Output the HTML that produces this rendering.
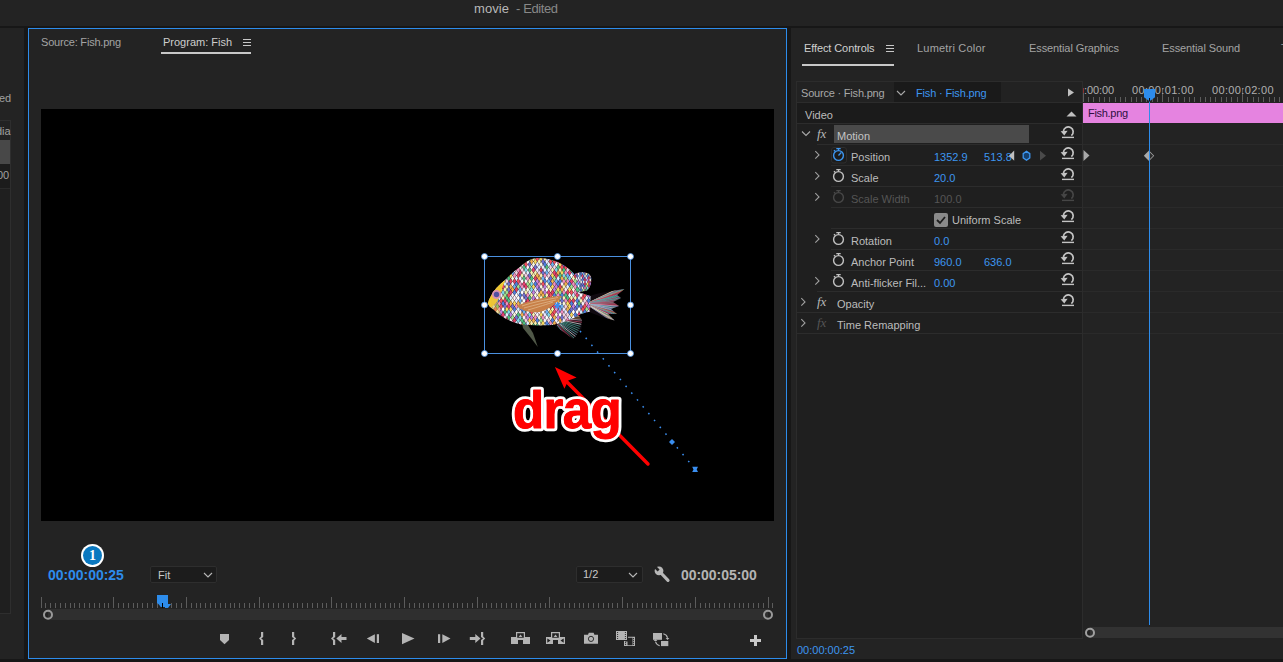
<!DOCTYPE html>
<html><head><meta charset="utf-8">
<style>
*{margin:0;padding:0;box-sizing:border-box}
html,body{width:1283px;height:662px;overflow:hidden;background:#171717;font-family:"Liberation Sans",sans-serif;position:relative}
.a{position:absolute}
.t{position:absolute;white-space:pre;line-height:1;font-size:11px;color:#b4b4b4}
</style></head><body>
<div class="a" style="left:0;top:0;width:1283px;height:26px;background:#232323"></div>
<div class="t" style="left:474px;top:2px;font-size:13px;color:#b8b8b8;letter-spacing:0.1px">movie</div>
<div class="t" style="left:516px;top:2px;font-size:13px;color:#888888;letter-spacing:-0.4px">- Edited</div>
<div class="a" style="left:0;top:28px;width:24px;height:631px;background:#232323"></div>
<div class="t" style="left:-1px;top:93px;color:#a0a0a0">ed</div>
<div class="a" style="left:0;top:120px;width:11px;height:494px;background:#1f1f1f;border-right:1px solid #2e2e2e;border-top:1px solid #2e2e2e;border-bottom:1px solid #2e2e2e"></div>
<div class="a" style="left:0;top:121px;width:10px;height:19px;background:#222"></div>
<div class="a" style="left:0;top:140px;width:10px;height:24px;background:#484848"></div>
<div class="a" style="left:0;top:164px;width:10px;height:24px;background:#1c1c1c"></div>
<div class="a" style="left:0;top:188px;width:10px;height:1px;background:#2a2a2a"></div>
<div class="t" style="left:-4px;top:126px;color:#a0a0a0">dia</div>
<div class="t" style="left:-3px;top:170px;color:#a0a0a0">00</div>
<div class="a" style="left:28px;top:28px;width:759px;height:631px;background:#232323;border:1px solid #2d8ceb"></div>
<div class="a" style="left:791px;top:28px;width:492px;height:631px;background:#232323"></div>
<div class="t" style="left:41px;top:37px;color:#a4a4a4;letter-spacing:-0.2px">Source: Fish.png</div>
<div class="t" style="left:163px;top:37px;color:#cdcdcd;letter-spacing:0px">Program: Fish</div>
<svg class="a" style="left:242px;top:38px" width="10" height="9"><path d="M1 1.5h8M1 4.5h8M1 7.5h8" stroke="#c8c8c8" stroke-width="1.2"/></svg>
<div class="a" style="left:161px;top:52px;width:90px;height:2px;background:#c8c8c8"></div>
<div class="a" style="left:41px;top:109px;width:733px;height:412px;background:#000"></div>
<svg class="a" style="left:41px;top:109px" width="733" height="412" viewBox="41 109 733 412">
<defs><clipPath id="cb"><path d="M488 303 C490 295 497 286 505 280 C510 275 515 270 520 267 C525 262 531 258 538 258 C548 258 558 261 565 266 C571 270 575 274 578 280 L578 292 L590.5 296 L590 311.5 L581 314 C575 318 565 322 555 324.6 C545 326 530 325.5 521 324.6 C510 322 500 316 494 310 C490 307 488 305 488 303 Z"/></clipPath><clipPath id="ct"><path d="M589 296 L600 293 L612 291 L624.5 289 L617 295 L621 298 L613 302 L619 306 L611 309 L617 314 L608 314 L614.6 320.6 L602 317 L589 312 Z"/></clipPath><clipPath id="cd"><path d="M574.6 274 C578 272 584 272 587 273 C590 274 592 277 591.3 281 C591 286 589 289 586.7 290.7 L577.7 292.3 Z"/></clipPath><clipPath id="ca"><path d="M555 325.8 L578 314.3 L582 320 L581.4 328.6 L576 336 L573.3 339 L566 334 Z"/></clipPath></defs>
<g clip-path="url(#ct)"><rect x="585" y="285" width="42" height="40" fill="#100a10"/><path d="M586 304L627.0 284.0" stroke="#e0b070" stroke-width="0.7"/>
<path d="M586 304L626.8 284.9" stroke="#f0d0e0" stroke-width="0.7"/>
<path d="M586 304L626.5 285.8" stroke="#50b0a0" stroke-width="0.7"/>
<path d="M586 304L626.3 286.7" stroke="#d05070" stroke-width="0.7"/>
<path d="M586 304L626.0 287.6" stroke="#70b0c0" stroke-width="0.7"/>
<path d="M586 304L625.8 288.4" stroke="#70b0c0" stroke-width="0.7"/>
<path d="M586 304L625.5 289.3" stroke="#e0b070" stroke-width="0.7"/>
<path d="M586 304L625.3 290.2" stroke="#d05070" stroke-width="0.7"/>
<path d="M586 304L625.0 291.1" stroke="#c04060" stroke-width="0.7"/>
<path d="M586 304L624.8 292.0" stroke="#d05070" stroke-width="0.7"/>
<path d="M586 304L624.6 292.9" stroke="#70b0c0" stroke-width="0.7"/>
<path d="M586 304L624.3 293.8" stroke="#50b0a0" stroke-width="0.7"/>
<path d="M586 304L624.1 294.7" stroke="#50b0a0" stroke-width="0.7"/>
<path d="M586 304L623.8 295.6" stroke="#70b0c0" stroke-width="0.7"/>
<path d="M586 304L623.6 296.4" stroke="#c04060" stroke-width="0.7"/>
<path d="M586 304L623.3 297.3" stroke="#70b0c0" stroke-width="0.7"/>
<path d="M586 304L623.1 298.2" stroke="#50b0a0" stroke-width="0.7"/>
<path d="M586 304L622.8 299.1" stroke="#d05070" stroke-width="0.7"/>
<path d="M586 304L622.6 300.0" stroke="#70b0c0" stroke-width="0.7"/>
<path d="M586 304L622.4 300.9" stroke="#c04060" stroke-width="0.7"/>
<path d="M586 304L622.1 301.8" stroke="#d05070" stroke-width="0.7"/>
<path d="M586 304L621.9 302.7" stroke="#50b0a0" stroke-width="0.7"/>
<path d="M586 304L621.6 303.6" stroke="#d05070" stroke-width="0.7"/>
<path d="M586 304L621.4 304.4" stroke="#c04060" stroke-width="0.7"/>
<path d="M586 304L621.1 305.3" stroke="#d05070" stroke-width="0.7"/>
<path d="M586 304L620.9 306.2" stroke="#f0d0e0" stroke-width="0.7"/>
<path d="M586 304L620.6 307.1" stroke="#8090d0" stroke-width="0.7"/>
<path d="M586 304L620.4 308.0" stroke="#50b0a0" stroke-width="0.7"/>
<path d="M586 304L620.2 308.9" stroke="#f0d0e0" stroke-width="0.7"/>
<path d="M586 304L619.9 309.8" stroke="#70b0c0" stroke-width="0.7"/>
<path d="M586 304L619.7 310.7" stroke="#8090d0" stroke-width="0.7"/>
<path d="M586 304L619.4 311.6" stroke="#f0d0e0" stroke-width="0.7"/>
<path d="M586 304L619.2 312.4" stroke="#70b0c0" stroke-width="0.7"/>
<path d="M586 304L618.9 313.3" stroke="#c04060" stroke-width="0.7"/>
<path d="M586 304L618.7 314.2" stroke="#e0b070" stroke-width="0.7"/>
<path d="M586 304L618.4 315.1" stroke="#70b0c0" stroke-width="0.7"/>
<path d="M586 304L618.2 316.0" stroke="#70b0c0" stroke-width="0.7"/>
<path d="M586 304L618.0 316.9" stroke="#d05070" stroke-width="0.7"/>
<path d="M586 304L617.7 317.8" stroke="#c04060" stroke-width="0.7"/>
<path d="M586 304L617.5 318.7" stroke="#f0f0f0" stroke-width="0.7"/>
<path d="M586 304L617.2 319.6" stroke="#50b0a0" stroke-width="0.7"/>
<path d="M586 304L617.0 320.4" stroke="#e0b070" stroke-width="0.7"/>
<path d="M586 304L616.7 321.3" stroke="#f0f0f0" stroke-width="0.7"/>
<path d="M586 304L616.5 322.2" stroke="#f0f0f0" stroke-width="0.7"/>
<path d="M586 304L616.2 323.1" stroke="#e0b070" stroke-width="0.7"/>
<path d="M586 304L616.0 324.0" stroke="#8090d0" stroke-width="0.7"/></g>
<g clip-path="url(#cd)"><rect x="570" y="270" width="25" height="25" fill="#2a1a28"/><path d="M572.0 270.0l1.0 2.0-1.0 2.0-1.0-2.0z" fill="#f0b050"/>
<path d="M574.6 270.0l1.0 2.0-1.0 2.0-1.0-2.0z" fill="#a0e090"/>
<path d="M577.2 270.0l1.0 2.0-1.0 2.0-1.0-2.0z" fill="#f0b050"/>
<path d="M579.8 270.0l1.0 2.0-1.0 2.0-1.0-2.0z" fill="#5080e0"/>
<path d="M582.4 270.0l1.0 2.0-1.0 2.0-1.0-2.0z" fill="#d0e8f8"/>
<path d="M585.0 270.0l1.0 2.0-1.0 2.0-1.0-2.0z" fill="#c080e0"/>
<path d="M587.6 270.0l1.0 2.0-1.0 2.0-1.0-2.0z" fill="#f8f0b0"/>
<path d="M590.2 270.0l1.0 2.0-1.0 2.0-1.0-2.0z" fill="#7070d0"/>
<path d="M592.8 270.0l1.0 2.0-1.0 2.0-1.0-2.0z" fill="#f8f0f8"/>
<path d="M573.3 272.0l1.0 2.0-1.0 2.0-1.0-2.0z" fill="#e04060"/>
<path d="M575.9 272.0l1.0 2.0-1.0 2.0-1.0-2.0z" fill="#c080e0"/>
<path d="M578.5 272.0l1.0 2.0-1.0 2.0-1.0-2.0z" fill="#fff0f8"/>
<path d="M581.1 272.0l1.0 2.0-1.0 2.0-1.0-2.0z" fill="#5080e0"/>
<path d="M583.7 272.0l1.0 2.0-1.0 2.0-1.0-2.0z" fill="#70b0f0"/>
<path d="M586.3 272.0l1.0 2.0-1.0 2.0-1.0-2.0z" fill="#f8f0b0"/>
<path d="M588.9 272.0l1.0 2.0-1.0 2.0-1.0-2.0z" fill="#80d8e8"/>
<path d="M591.5 272.0l1.0 2.0-1.0 2.0-1.0-2.0z" fill="#a0e090"/>
<path d="M572.0 274.0l1.0 2.0-1.0 2.0-1.0-2.0z" fill="#f8f0f8"/>
<path d="M574.6 274.0l1.0 2.0-1.0 2.0-1.0-2.0z" fill="#50c080"/>
<path d="M577.2 274.0l1.0 2.0-1.0 2.0-1.0-2.0z" fill="#7070d0"/>
<path d="M579.8 274.0l1.0 2.0-1.0 2.0-1.0-2.0z" fill="#80d8e8"/>
<path d="M582.4 274.0l1.0 2.0-1.0 2.0-1.0-2.0z" fill="#e84070"/>
<path d="M585.0 274.0l1.0 2.0-1.0 2.0-1.0-2.0z" fill="#e0f0ff"/>
<path d="M587.6 274.0l1.0 2.0-1.0 2.0-1.0-2.0z" fill="#5080e0"/>
<path d="M590.2 274.0l1.0 2.0-1.0 2.0-1.0-2.0z" fill="#f0d0e0"/>
<path d="M592.8 274.0l1.0 2.0-1.0 2.0-1.0-2.0z" fill="#d0e8f8"/>
<path d="M573.3 276.0l1.0 2.0-1.0 2.0-1.0-2.0z" fill="#f8f0f8"/>
<path d="M575.9 276.0l1.0 2.0-1.0 2.0-1.0-2.0z" fill="#f8f0f8"/>
<path d="M578.5 276.0l1.0 2.0-1.0 2.0-1.0-2.0z" fill="#e8e8ff"/>
<path d="M581.1 276.0l1.0 2.0-1.0 2.0-1.0-2.0z" fill="#fff0f8"/>
<path d="M583.7 276.0l1.0 2.0-1.0 2.0-1.0-2.0z" fill="#7070d0"/>
<path d="M586.3 276.0l1.0 2.0-1.0 2.0-1.0-2.0z" fill="#d0e8f8"/>
<path d="M588.9 276.0l1.0 2.0-1.0 2.0-1.0-2.0z" fill="#e04060"/>
<path d="M591.5 276.0l1.0 2.0-1.0 2.0-1.0-2.0z" fill="#5080e0"/>
<path d="M572.0 278.0l1.0 2.0-1.0 2.0-1.0-2.0z" fill="#5080e0"/>
<path d="M574.6 278.0l1.0 2.0-1.0 2.0-1.0-2.0z" fill="#f090c0"/>
<path d="M577.2 278.0l1.0 2.0-1.0 2.0-1.0-2.0z" fill="#7070d0"/>
<path d="M579.8 278.0l1.0 2.0-1.0 2.0-1.0-2.0z" fill="#e0f0ff"/>
<path d="M582.4 278.0l1.0 2.0-1.0 2.0-1.0-2.0z" fill="#5080e0"/>
<path d="M585.0 278.0l1.0 2.0-1.0 2.0-1.0-2.0z" fill="#e84070"/>
<path d="M587.6 278.0l1.0 2.0-1.0 2.0-1.0-2.0z" fill="#c080e0"/>
<path d="M590.2 278.0l1.0 2.0-1.0 2.0-1.0-2.0z" fill="#f8f8e0"/>
<path d="M592.8 278.0l1.0 2.0-1.0 2.0-1.0-2.0z" fill="#d0e8f8"/>
<path d="M573.3 280.0l1.0 2.0-1.0 2.0-1.0-2.0z" fill="#e0f0ff"/>
<path d="M575.9 280.0l1.0 2.0-1.0 2.0-1.0-2.0z" fill="#e04060"/>
<path d="M578.5 280.0l1.0 2.0-1.0 2.0-1.0-2.0z" fill="#c080e0"/>
<path d="M581.1 280.0l1.0 2.0-1.0 2.0-1.0-2.0z" fill="#ffffff"/>
<path d="M583.7 280.0l1.0 2.0-1.0 2.0-1.0-2.0z" fill="#e0f0ff"/>
<path d="M586.3 280.0l1.0 2.0-1.0 2.0-1.0-2.0z" fill="#e8e8ff"/>
<path d="M588.9 280.0l1.0 2.0-1.0 2.0-1.0-2.0z" fill="#f05060"/>
<path d="M591.5 280.0l1.0 2.0-1.0 2.0-1.0-2.0z" fill="#e04060"/>
<path d="M572.0 282.0l1.0 2.0-1.0 2.0-1.0-2.0z" fill="#e8e8ff"/>
<path d="M574.6 282.0l1.0 2.0-1.0 2.0-1.0-2.0z" fill="#a0e090"/>
<path d="M577.2 282.0l1.0 2.0-1.0 2.0-1.0-2.0z" fill="#fff0f8"/>
<path d="M579.8 282.0l1.0 2.0-1.0 2.0-1.0-2.0z" fill="#70b0f0"/>
<path d="M582.4 282.0l1.0 2.0-1.0 2.0-1.0-2.0z" fill="#7070d0"/>
<path d="M585.0 282.0l1.0 2.0-1.0 2.0-1.0-2.0z" fill="#e84070"/>
<path d="M587.6 282.0l1.0 2.0-1.0 2.0-1.0-2.0z" fill="#f8d860"/>
<path d="M590.2 282.0l1.0 2.0-1.0 2.0-1.0-2.0z" fill="#c080e0"/>
<path d="M592.8 282.0l1.0 2.0-1.0 2.0-1.0-2.0z" fill="#50c080"/>
<path d="M573.3 284.0l1.0 2.0-1.0 2.0-1.0-2.0z" fill="#f0b050"/>
<path d="M575.9 284.0l1.0 2.0-1.0 2.0-1.0-2.0z" fill="#ffffff"/>
<path d="M578.5 284.0l1.0 2.0-1.0 2.0-1.0-2.0z" fill="#ffffff"/>
<path d="M581.1 284.0l1.0 2.0-1.0 2.0-1.0-2.0z" fill="#7070d0"/>
<path d="M583.7 284.0l1.0 2.0-1.0 2.0-1.0-2.0z" fill="#5080e0"/>
<path d="M586.3 284.0l1.0 2.0-1.0 2.0-1.0-2.0z" fill="#a0e090"/>
<path d="M588.9 284.0l1.0 2.0-1.0 2.0-1.0-2.0z" fill="#e04060"/>
<path d="M591.5 284.0l1.0 2.0-1.0 2.0-1.0-2.0z" fill="#ffffff"/>
<path d="M572.0 286.0l1.0 2.0-1.0 2.0-1.0-2.0z" fill="#f0d0e0"/>
<path d="M574.6 286.0l1.0 2.0-1.0 2.0-1.0-2.0z" fill="#f090c0"/>
<path d="M577.2 286.0l1.0 2.0-1.0 2.0-1.0-2.0z" fill="#50c080"/>
<path d="M579.8 286.0l1.0 2.0-1.0 2.0-1.0-2.0z" fill="#80d8e8"/>
<path d="M582.4 286.0l1.0 2.0-1.0 2.0-1.0-2.0z" fill="#f0d0e0"/>
<path d="M585.0 286.0l1.0 2.0-1.0 2.0-1.0-2.0z" fill="#f090c0"/>
<path d="M587.6 286.0l1.0 2.0-1.0 2.0-1.0-2.0z" fill="#80d8e8"/>
<path d="M590.2 286.0l1.0 2.0-1.0 2.0-1.0-2.0z" fill="#e8e8ff"/>
<path d="M592.8 286.0l1.0 2.0-1.0 2.0-1.0-2.0z" fill="#e0f0ff"/>
<path d="M573.3 288.0l1.0 2.0-1.0 2.0-1.0-2.0z" fill="#ffffff"/>
<path d="M575.9 288.0l1.0 2.0-1.0 2.0-1.0-2.0z" fill="#f0b050"/>
<path d="M578.5 288.0l1.0 2.0-1.0 2.0-1.0-2.0z" fill="#50c080"/>
<path d="M581.1 288.0l1.0 2.0-1.0 2.0-1.0-2.0z" fill="#5080e0"/>
<path d="M583.7 288.0l1.0 2.0-1.0 2.0-1.0-2.0z" fill="#a0e090"/>
<path d="M586.3 288.0l1.0 2.0-1.0 2.0-1.0-2.0z" fill="#50c080"/>
<path d="M588.9 288.0l1.0 2.0-1.0 2.0-1.0-2.0z" fill="#f0b050"/>
<path d="M591.5 288.0l1.0 2.0-1.0 2.0-1.0-2.0z" fill="#e0f0ff"/>
<path d="M572.0 290.0l1.0 2.0-1.0 2.0-1.0-2.0z" fill="#f0b050"/>
<path d="M574.6 290.0l1.0 2.0-1.0 2.0-1.0-2.0z" fill="#f05060"/>
<path d="M577.2 290.0l1.0 2.0-1.0 2.0-1.0-2.0z" fill="#7070d0"/>
<path d="M579.8 290.0l1.0 2.0-1.0 2.0-1.0-2.0z" fill="#d0e8f8"/>
<path d="M582.4 290.0l1.0 2.0-1.0 2.0-1.0-2.0z" fill="#a0e090"/>
<path d="M585.0 290.0l1.0 2.0-1.0 2.0-1.0-2.0z" fill="#f090c0"/>
<path d="M587.6 290.0l1.0 2.0-1.0 2.0-1.0-2.0z" fill="#c080e0"/>
<path d="M590.2 290.0l1.0 2.0-1.0 2.0-1.0-2.0z" fill="#f05060"/>
<path d="M592.8 290.0l1.0 2.0-1.0 2.0-1.0-2.0z" fill="#50c080"/></g>
<g clip-path="url(#ca)"><rect x="552" y="312" width="32" height="30" fill="#100a10"/><path d="M552 318L586.0 314.0" stroke="#50b0a0" stroke-width="0.7"/>
<path d="M552 318L585.1 316.1" stroke="#e0b070" stroke-width="0.7"/>
<path d="M552 318L584.1 318.1" stroke="#e0b070" stroke-width="0.7"/>
<path d="M552 318L583.2 320.2" stroke="#f0d0e0" stroke-width="0.7"/>
<path d="M552 318L582.3 322.3" stroke="#d05070" stroke-width="0.7"/>
<path d="M552 318L581.3 324.3" stroke="#f0f0f0" stroke-width="0.7"/>
<path d="M552 318L580.4 326.4" stroke="#50b0a0" stroke-width="0.7"/>
<path d="M552 318L579.5 328.5" stroke="#50b0a0" stroke-width="0.7"/>
<path d="M552 318L578.5 330.5" stroke="#50b0a0" stroke-width="0.7"/>
<path d="M552 318L577.6 332.6" stroke="#50b0a0" stroke-width="0.7"/>
<path d="M552 318L576.7 334.7" stroke="#70b0c0" stroke-width="0.7"/>
<path d="M552 318L575.7 336.7" stroke="#f0f0f0" stroke-width="0.7"/>
<path d="M552 318L574.8 338.8" stroke="#50b0a0" stroke-width="0.7"/>
<path d="M552 318L573.9 340.9" stroke="#d05070" stroke-width="0.7"/>
<path d="M552 318L572.9 342.9" stroke="#c04060" stroke-width="0.7"/>
<path d="M552 318L572.0 345.0" stroke="#70b0c0" stroke-width="0.7"/></g>
<path d="M522 323 L528 325 L533 333 L537.8 347 L531 338 L523 328 Z" fill="#505848"/>
<g clip-path="url(#cb)"><rect x="486" y="256" width="108" height="72" fill="#201018"/><path d="M486.0 253.2l1.6 2.8-1.6 2.8-1.6-2.8z" fill="#f8d860"/>
<path d="M489.8 253.2l1.6 2.8-1.6 2.8-1.6-2.8z" fill="#e04060"/>
<path d="M493.6 253.2l1.6 2.8-1.6 2.8-1.6-2.8z" fill="#a0e090"/>
<path d="M497.4 253.2l1.6 2.8-1.6 2.8-1.6-2.8z" fill="#70b0f0"/>
<path d="M501.2 253.2l1.6 2.8-1.6 2.8-1.6-2.8z" fill="#f8f0f8"/>
<path d="M505.0 253.2l1.6 2.8-1.6 2.8-1.6-2.8z" fill="#fff0f8"/>
<path d="M508.8 253.2l1.6 2.8-1.6 2.8-1.6-2.8z" fill="#e84070"/>
<path d="M512.6 253.2l1.6 2.8-1.6 2.8-1.6-2.8z" fill="#70b0f0"/>
<path d="M516.4 253.2l1.6 2.8-1.6 2.8-1.6-2.8z" fill="#f05060"/>
<path d="M520.2 253.2l1.6 2.8-1.6 2.8-1.6-2.8z" fill="#d0e8f8"/>
<path d="M524.0 253.2l1.6 2.8-1.6 2.8-1.6-2.8z" fill="#50c080"/>
<path d="M527.8 253.2l1.6 2.8-1.6 2.8-1.6-2.8z" fill="#f0d0e0"/>
<path d="M531.6 253.2l1.6 2.8-1.6 2.8-1.6-2.8z" fill="#70b0f0"/>
<path d="M535.4 253.2l1.6 2.8-1.6 2.8-1.6-2.8z" fill="#e8e8ff"/>
<path d="M539.2 253.2l1.6 2.8-1.6 2.8-1.6-2.8z" fill="#fff0f8"/>
<path d="M543.0 253.2l1.6 2.8-1.6 2.8-1.6-2.8z" fill="#f05060"/>
<path d="M546.8 253.2l1.6 2.8-1.6 2.8-1.6-2.8z" fill="#5080e0"/>
<path d="M550.6 253.2l1.6 2.8-1.6 2.8-1.6-2.8z" fill="#f8d860"/>
<path d="M554.4 253.2l1.6 2.8-1.6 2.8-1.6-2.8z" fill="#fff0f8"/>
<path d="M558.2 253.2l1.6 2.8-1.6 2.8-1.6-2.8z" fill="#ffffff"/>
<path d="M562.0 253.2l1.6 2.8-1.6 2.8-1.6-2.8z" fill="#50c080"/>
<path d="M565.8 253.2l1.6 2.8-1.6 2.8-1.6-2.8z" fill="#f8f8e0"/>
<path d="M569.6 253.2l1.6 2.8-1.6 2.8-1.6-2.8z" fill="#f090c0"/>
<path d="M573.4 253.2l1.6 2.8-1.6 2.8-1.6-2.8z" fill="#e8e8ff"/>
<path d="M577.2 253.2l1.6 2.8-1.6 2.8-1.6-2.8z" fill="#fff0f8"/>
<path d="M581.0 253.2l1.6 2.8-1.6 2.8-1.6-2.8z" fill="#e8e8ff"/>
<path d="M584.8 253.2l1.6 2.8-1.6 2.8-1.6-2.8z" fill="#7070d0"/>
<path d="M588.6 253.2l1.6 2.8-1.6 2.8-1.6-2.8z" fill="#70b0f0"/>
<path d="M592.4 253.2l1.6 2.8-1.6 2.8-1.6-2.8z" fill="#70b0f0"/>
<path d="M487.9 256.0l1.6 2.8-1.6 2.8-1.6-2.8z" fill="#7070d0"/>
<path d="M491.7 256.0l1.6 2.8-1.6 2.8-1.6-2.8z" fill="#e04060"/>
<path d="M495.5 256.0l1.6 2.8-1.6 2.8-1.6-2.8z" fill="#7070d0"/>
<path d="M499.3 256.0l1.6 2.8-1.6 2.8-1.6-2.8z" fill="#7070d0"/>
<path d="M503.1 256.0l1.6 2.8-1.6 2.8-1.6-2.8z" fill="#c080e0"/>
<path d="M506.9 256.0l1.6 2.8-1.6 2.8-1.6-2.8z" fill="#5080e0"/>
<path d="M510.7 256.0l1.6 2.8-1.6 2.8-1.6-2.8z" fill="#50c080"/>
<path d="M514.5 256.0l1.6 2.8-1.6 2.8-1.6-2.8z" fill="#70b0f0"/>
<path d="M518.3 256.0l1.6 2.8-1.6 2.8-1.6-2.8z" fill="#f8f0f8"/>
<path d="M522.1 256.0l1.6 2.8-1.6 2.8-1.6-2.8z" fill="#f090c0"/>
<path d="M525.9 256.0l1.6 2.8-1.6 2.8-1.6-2.8z" fill="#7070d0"/>
<path d="M529.7 256.0l1.6 2.8-1.6 2.8-1.6-2.8z" fill="#a0e090"/>
<path d="M533.5 256.0l1.6 2.8-1.6 2.8-1.6-2.8z" fill="#f8f0b0"/>
<path d="M537.3 256.0l1.6 2.8-1.6 2.8-1.6-2.8z" fill="#f05060"/>
<path d="M541.1 256.0l1.6 2.8-1.6 2.8-1.6-2.8z" fill="#f8d860"/>
<path d="M544.9 256.0l1.6 2.8-1.6 2.8-1.6-2.8z" fill="#f8f0b0"/>
<path d="M548.7 256.0l1.6 2.8-1.6 2.8-1.6-2.8z" fill="#e8e8ff"/>
<path d="M552.5 256.0l1.6 2.8-1.6 2.8-1.6-2.8z" fill="#50c080"/>
<path d="M556.3 256.0l1.6 2.8-1.6 2.8-1.6-2.8z" fill="#f0d0e0"/>
<path d="M560.1 256.0l1.6 2.8-1.6 2.8-1.6-2.8z" fill="#f05060"/>
<path d="M563.9 256.0l1.6 2.8-1.6 2.8-1.6-2.8z" fill="#f8f0b0"/>
<path d="M567.7 256.0l1.6 2.8-1.6 2.8-1.6-2.8z" fill="#c080e0"/>
<path d="M571.5 256.0l1.6 2.8-1.6 2.8-1.6-2.8z" fill="#f8f8e0"/>
<path d="M575.3 256.0l1.6 2.8-1.6 2.8-1.6-2.8z" fill="#5080e0"/>
<path d="M579.1 256.0l1.6 2.8-1.6 2.8-1.6-2.8z" fill="#f090c0"/>
<path d="M582.9 256.0l1.6 2.8-1.6 2.8-1.6-2.8z" fill="#f8f0b0"/>
<path d="M586.7 256.0l1.6 2.8-1.6 2.8-1.6-2.8z" fill="#e8e8ff"/>
<path d="M590.5 256.0l1.6 2.8-1.6 2.8-1.6-2.8z" fill="#a0e090"/>
<path d="M486.0 258.8l1.6 2.8-1.6 2.8-1.6-2.8z" fill="#e8e8ff"/>
<path d="M489.8 258.8l1.6 2.8-1.6 2.8-1.6-2.8z" fill="#f0b050"/>
<path d="M493.6 258.8l1.6 2.8-1.6 2.8-1.6-2.8z" fill="#f0d0e0"/>
<path d="M497.4 258.8l1.6 2.8-1.6 2.8-1.6-2.8z" fill="#f0d0e0"/>
<path d="M501.2 258.8l1.6 2.8-1.6 2.8-1.6-2.8z" fill="#f8f0b0"/>
<path d="M505.0 258.8l1.6 2.8-1.6 2.8-1.6-2.8z" fill="#f8f0f8"/>
<path d="M508.8 258.8l1.6 2.8-1.6 2.8-1.6-2.8z" fill="#f8f8e0"/>
<path d="M512.6 258.8l1.6 2.8-1.6 2.8-1.6-2.8z" fill="#f0b050"/>
<path d="M516.4 258.8l1.6 2.8-1.6 2.8-1.6-2.8z" fill="#fff0f8"/>
<path d="M520.2 258.8l1.6 2.8-1.6 2.8-1.6-2.8z" fill="#f8d860"/>
<path d="M524.0 258.8l1.6 2.8-1.6 2.8-1.6-2.8z" fill="#f0b050"/>
<path d="M527.8 258.8l1.6 2.8-1.6 2.8-1.6-2.8z" fill="#ffffff"/>
<path d="M531.6 258.8l1.6 2.8-1.6 2.8-1.6-2.8z" fill="#f0b050"/>
<path d="M535.4 258.8l1.6 2.8-1.6 2.8-1.6-2.8z" fill="#f8d860"/>
<path d="M539.2 258.8l1.6 2.8-1.6 2.8-1.6-2.8z" fill="#f8f0b0"/>
<path d="M543.0 258.8l1.6 2.8-1.6 2.8-1.6-2.8z" fill="#7070d0"/>
<path d="M546.8 258.8l1.6 2.8-1.6 2.8-1.6-2.8z" fill="#e8e8ff"/>
<path d="M550.6 258.8l1.6 2.8-1.6 2.8-1.6-2.8z" fill="#f05060"/>
<path d="M554.4 258.8l1.6 2.8-1.6 2.8-1.6-2.8z" fill="#f05060"/>
<path d="M558.2 258.8l1.6 2.8-1.6 2.8-1.6-2.8z" fill="#f090c0"/>
<path d="M562.0 258.8l1.6 2.8-1.6 2.8-1.6-2.8z" fill="#7070d0"/>
<path d="M565.8 258.8l1.6 2.8-1.6 2.8-1.6-2.8z" fill="#f090c0"/>
<path d="M569.6 258.8l1.6 2.8-1.6 2.8-1.6-2.8z" fill="#f8d860"/>
<path d="M573.4 258.8l1.6 2.8-1.6 2.8-1.6-2.8z" fill="#fff0f8"/>
<path d="M577.2 258.8l1.6 2.8-1.6 2.8-1.6-2.8z" fill="#e8e8ff"/>
<path d="M581.0 258.8l1.6 2.8-1.6 2.8-1.6-2.8z" fill="#e04060"/>
<path d="M584.8 258.8l1.6 2.8-1.6 2.8-1.6-2.8z" fill="#e8e8ff"/>
<path d="M588.6 258.8l1.6 2.8-1.6 2.8-1.6-2.8z" fill="#e8e8ff"/>
<path d="M592.4 258.8l1.6 2.8-1.6 2.8-1.6-2.8z" fill="#5080e0"/>
<path d="M487.9 261.6l1.6 2.8-1.6 2.8-1.6-2.8z" fill="#f0b050"/>
<path d="M491.7 261.6l1.6 2.8-1.6 2.8-1.6-2.8z" fill="#70b0f0"/>
<path d="M495.5 261.6l1.6 2.8-1.6 2.8-1.6-2.8z" fill="#f0b050"/>
<path d="M499.3 261.6l1.6 2.8-1.6 2.8-1.6-2.8z" fill="#7070d0"/>
<path d="M503.1 261.6l1.6 2.8-1.6 2.8-1.6-2.8z" fill="#f8d860"/>
<path d="M506.9 261.6l1.6 2.8-1.6 2.8-1.6-2.8z" fill="#f8f0f8"/>
<path d="M510.7 261.6l1.6 2.8-1.6 2.8-1.6-2.8z" fill="#f8d860"/>
<path d="M514.5 261.6l1.6 2.8-1.6 2.8-1.6-2.8z" fill="#7070d0"/>
<path d="M518.3 261.6l1.6 2.8-1.6 2.8-1.6-2.8z" fill="#fff0f8"/>
<path d="M522.1 261.6l1.6 2.8-1.6 2.8-1.6-2.8z" fill="#fff0f8"/>
<path d="M525.9 261.6l1.6 2.8-1.6 2.8-1.6-2.8z" fill="#f05060"/>
<path d="M529.7 261.6l1.6 2.8-1.6 2.8-1.6-2.8z" fill="#7070d0"/>
<path d="M533.5 261.6l1.6 2.8-1.6 2.8-1.6-2.8z" fill="#f8f8e0"/>
<path d="M537.3 261.6l1.6 2.8-1.6 2.8-1.6-2.8z" fill="#e8e8ff"/>
<path d="M541.1 261.6l1.6 2.8-1.6 2.8-1.6-2.8z" fill="#f8f8e0"/>
<path d="M544.9 261.6l1.6 2.8-1.6 2.8-1.6-2.8z" fill="#5080e0"/>
<path d="M548.7 261.6l1.6 2.8-1.6 2.8-1.6-2.8z" fill="#e0f0ff"/>
<path d="M552.5 261.6l1.6 2.8-1.6 2.8-1.6-2.8z" fill="#70b0f0"/>
<path d="M556.3 261.6l1.6 2.8-1.6 2.8-1.6-2.8z" fill="#ffffff"/>
<path d="M560.1 261.6l1.6 2.8-1.6 2.8-1.6-2.8z" fill="#f8d860"/>
<path d="M563.9 261.6l1.6 2.8-1.6 2.8-1.6-2.8z" fill="#7070d0"/>
<path d="M567.7 261.6l1.6 2.8-1.6 2.8-1.6-2.8z" fill="#a0e090"/>
<path d="M571.5 261.6l1.6 2.8-1.6 2.8-1.6-2.8z" fill="#80d8e8"/>
<path d="M575.3 261.6l1.6 2.8-1.6 2.8-1.6-2.8z" fill="#f8f8e0"/>
<path d="M579.1 261.6l1.6 2.8-1.6 2.8-1.6-2.8z" fill="#f8f0f8"/>
<path d="M582.9 261.6l1.6 2.8-1.6 2.8-1.6-2.8z" fill="#5080e0"/>
<path d="M586.7 261.6l1.6 2.8-1.6 2.8-1.6-2.8z" fill="#ffffff"/>
<path d="M590.5 261.6l1.6 2.8-1.6 2.8-1.6-2.8z" fill="#e04060"/>
<path d="M486.0 264.4l1.6 2.8-1.6 2.8-1.6-2.8z" fill="#ffffff"/>
<path d="M489.8 264.4l1.6 2.8-1.6 2.8-1.6-2.8z" fill="#5080e0"/>
<path d="M493.6 264.4l1.6 2.8-1.6 2.8-1.6-2.8z" fill="#a0e090"/>
<path d="M497.4 264.4l1.6 2.8-1.6 2.8-1.6-2.8z" fill="#a0e090"/>
<path d="M501.2 264.4l1.6 2.8-1.6 2.8-1.6-2.8z" fill="#50c080"/>
<path d="M505.0 264.4l1.6 2.8-1.6 2.8-1.6-2.8z" fill="#f05060"/>
<path d="M508.8 264.4l1.6 2.8-1.6 2.8-1.6-2.8z" fill="#50c080"/>
<path d="M512.6 264.4l1.6 2.8-1.6 2.8-1.6-2.8z" fill="#d0e8f8"/>
<path d="M516.4 264.4l1.6 2.8-1.6 2.8-1.6-2.8z" fill="#e04060"/>
<path d="M520.2 264.4l1.6 2.8-1.6 2.8-1.6-2.8z" fill="#f8f8e0"/>
<path d="M524.0 264.4l1.6 2.8-1.6 2.8-1.6-2.8z" fill="#50c080"/>
<path d="M527.8 264.4l1.6 2.8-1.6 2.8-1.6-2.8z" fill="#fff0f8"/>
<path d="M531.6 264.4l1.6 2.8-1.6 2.8-1.6-2.8z" fill="#fff0f8"/>
<path d="M535.4 264.4l1.6 2.8-1.6 2.8-1.6-2.8z" fill="#7070d0"/>
<path d="M539.2 264.4l1.6 2.8-1.6 2.8-1.6-2.8z" fill="#e0f0ff"/>
<path d="M543.0 264.4l1.6 2.8-1.6 2.8-1.6-2.8z" fill="#e8e8ff"/>
<path d="M546.8 264.4l1.6 2.8-1.6 2.8-1.6-2.8z" fill="#50c080"/>
<path d="M550.6 264.4l1.6 2.8-1.6 2.8-1.6-2.8z" fill="#f0d0e0"/>
<path d="M554.4 264.4l1.6 2.8-1.6 2.8-1.6-2.8z" fill="#f0d0e0"/>
<path d="M558.2 264.4l1.6 2.8-1.6 2.8-1.6-2.8z" fill="#50c080"/>
<path d="M562.0 264.4l1.6 2.8-1.6 2.8-1.6-2.8z" fill="#f05060"/>
<path d="M565.8 264.4l1.6 2.8-1.6 2.8-1.6-2.8z" fill="#f05060"/>
<path d="M569.6 264.4l1.6 2.8-1.6 2.8-1.6-2.8z" fill="#f8f8e0"/>
<path d="M573.4 264.4l1.6 2.8-1.6 2.8-1.6-2.8z" fill="#70b0f0"/>
<path d="M577.2 264.4l1.6 2.8-1.6 2.8-1.6-2.8z" fill="#f8f0b0"/>
<path d="M581.0 264.4l1.6 2.8-1.6 2.8-1.6-2.8z" fill="#50c080"/>
<path d="M584.8 264.4l1.6 2.8-1.6 2.8-1.6-2.8z" fill="#80d8e8"/>
<path d="M588.6 264.4l1.6 2.8-1.6 2.8-1.6-2.8z" fill="#f8d860"/>
<path d="M592.4 264.4l1.6 2.8-1.6 2.8-1.6-2.8z" fill="#f8d860"/>
<path d="M487.9 267.2l1.6 2.8-1.6 2.8-1.6-2.8z" fill="#f05060"/>
<path d="M491.7 267.2l1.6 2.8-1.6 2.8-1.6-2.8z" fill="#f090c0"/>
<path d="M495.5 267.2l1.6 2.8-1.6 2.8-1.6-2.8z" fill="#f8d860"/>
<path d="M499.3 267.2l1.6 2.8-1.6 2.8-1.6-2.8z" fill="#c080e0"/>
<path d="M503.1 267.2l1.6 2.8-1.6 2.8-1.6-2.8z" fill="#f8f0b0"/>
<path d="M506.9 267.2l1.6 2.8-1.6 2.8-1.6-2.8z" fill="#f0b050"/>
<path d="M510.7 267.2l1.6 2.8-1.6 2.8-1.6-2.8z" fill="#d0e8f8"/>
<path d="M514.5 267.2l1.6 2.8-1.6 2.8-1.6-2.8z" fill="#f8f0f8"/>
<path d="M518.3 267.2l1.6 2.8-1.6 2.8-1.6-2.8z" fill="#f090c0"/>
<path d="M522.1 267.2l1.6 2.8-1.6 2.8-1.6-2.8z" fill="#f0d0e0"/>
<path d="M525.9 267.2l1.6 2.8-1.6 2.8-1.6-2.8z" fill="#80d8e8"/>
<path d="M529.7 267.2l1.6 2.8-1.6 2.8-1.6-2.8z" fill="#50c080"/>
<path d="M533.5 267.2l1.6 2.8-1.6 2.8-1.6-2.8z" fill="#e84070"/>
<path d="M537.3 267.2l1.6 2.8-1.6 2.8-1.6-2.8z" fill="#e8e8ff"/>
<path d="M541.1 267.2l1.6 2.8-1.6 2.8-1.6-2.8z" fill="#e04060"/>
<path d="M544.9 267.2l1.6 2.8-1.6 2.8-1.6-2.8z" fill="#e0f0ff"/>
<path d="M548.7 267.2l1.6 2.8-1.6 2.8-1.6-2.8z" fill="#d0e8f8"/>
<path d="M552.5 267.2l1.6 2.8-1.6 2.8-1.6-2.8z" fill="#f8f0b0"/>
<path d="M556.3 267.2l1.6 2.8-1.6 2.8-1.6-2.8z" fill="#80d8e8"/>
<path d="M560.1 267.2l1.6 2.8-1.6 2.8-1.6-2.8z" fill="#f8f0b0"/>
<path d="M563.9 267.2l1.6 2.8-1.6 2.8-1.6-2.8z" fill="#50c080"/>
<path d="M567.7 267.2l1.6 2.8-1.6 2.8-1.6-2.8z" fill="#f0d0e0"/>
<path d="M571.5 267.2l1.6 2.8-1.6 2.8-1.6-2.8z" fill="#50c080"/>
<path d="M575.3 267.2l1.6 2.8-1.6 2.8-1.6-2.8z" fill="#f8f0b0"/>
<path d="M579.1 267.2l1.6 2.8-1.6 2.8-1.6-2.8z" fill="#f8f0b0"/>
<path d="M582.9 267.2l1.6 2.8-1.6 2.8-1.6-2.8z" fill="#f05060"/>
<path d="M586.7 267.2l1.6 2.8-1.6 2.8-1.6-2.8z" fill="#e04060"/>
<path d="M590.5 267.2l1.6 2.8-1.6 2.8-1.6-2.8z" fill="#a0e090"/>
<path d="M486.0 270.0l1.6 2.8-1.6 2.8-1.6-2.8z" fill="#fff0f8"/>
<path d="M489.8 270.0l1.6 2.8-1.6 2.8-1.6-2.8z" fill="#f05060"/>
<path d="M493.6 270.0l1.6 2.8-1.6 2.8-1.6-2.8z" fill="#50c080"/>
<path d="M497.4 270.0l1.6 2.8-1.6 2.8-1.6-2.8z" fill="#a0e090"/>
<path d="M501.2 270.0l1.6 2.8-1.6 2.8-1.6-2.8z" fill="#50c080"/>
<path d="M505.0 270.0l1.6 2.8-1.6 2.8-1.6-2.8z" fill="#7070d0"/>
<path d="M508.8 270.0l1.6 2.8-1.6 2.8-1.6-2.8z" fill="#fff0f8"/>
<path d="M512.6 270.0l1.6 2.8-1.6 2.8-1.6-2.8z" fill="#70b0f0"/>
<path d="M516.4 270.0l1.6 2.8-1.6 2.8-1.6-2.8z" fill="#f0d0e0"/>
<path d="M520.2 270.0l1.6 2.8-1.6 2.8-1.6-2.8z" fill="#e84070"/>
<path d="M524.0 270.0l1.6 2.8-1.6 2.8-1.6-2.8z" fill="#f8f0f8"/>
<path d="M527.8 270.0l1.6 2.8-1.6 2.8-1.6-2.8z" fill="#e0f0ff"/>
<path d="M531.6 270.0l1.6 2.8-1.6 2.8-1.6-2.8z" fill="#f8f0b0"/>
<path d="M535.4 270.0l1.6 2.8-1.6 2.8-1.6-2.8z" fill="#f8f0b0"/>
<path d="M539.2 270.0l1.6 2.8-1.6 2.8-1.6-2.8z" fill="#f0d0e0"/>
<path d="M543.0 270.0l1.6 2.8-1.6 2.8-1.6-2.8z" fill="#7070d0"/>
<path d="M546.8 270.0l1.6 2.8-1.6 2.8-1.6-2.8z" fill="#70b0f0"/>
<path d="M550.6 270.0l1.6 2.8-1.6 2.8-1.6-2.8z" fill="#f0d0e0"/>
<path d="M554.4 270.0l1.6 2.8-1.6 2.8-1.6-2.8z" fill="#e84070"/>
<path d="M558.2 270.0l1.6 2.8-1.6 2.8-1.6-2.8z" fill="#f0b050"/>
<path d="M562.0 270.0l1.6 2.8-1.6 2.8-1.6-2.8z" fill="#f8d860"/>
<path d="M565.8 270.0l1.6 2.8-1.6 2.8-1.6-2.8z" fill="#f090c0"/>
<path d="M569.6 270.0l1.6 2.8-1.6 2.8-1.6-2.8z" fill="#e84070"/>
<path d="M573.4 270.0l1.6 2.8-1.6 2.8-1.6-2.8z" fill="#70b0f0"/>
<path d="M577.2 270.0l1.6 2.8-1.6 2.8-1.6-2.8z" fill="#f8f0b0"/>
<path d="M581.0 270.0l1.6 2.8-1.6 2.8-1.6-2.8z" fill="#e04060"/>
<path d="M584.8 270.0l1.6 2.8-1.6 2.8-1.6-2.8z" fill="#f0d0e0"/>
<path d="M588.6 270.0l1.6 2.8-1.6 2.8-1.6-2.8z" fill="#f05060"/>
<path d="M592.4 270.0l1.6 2.8-1.6 2.8-1.6-2.8z" fill="#5080e0"/>
<path d="M487.9 272.8l1.6 2.8-1.6 2.8-1.6-2.8z" fill="#e04060"/>
<path d="M491.7 272.8l1.6 2.8-1.6 2.8-1.6-2.8z" fill="#f8f0f8"/>
<path d="M495.5 272.8l1.6 2.8-1.6 2.8-1.6-2.8z" fill="#fff0f8"/>
<path d="M499.3 272.8l1.6 2.8-1.6 2.8-1.6-2.8z" fill="#f8f0b0"/>
<path d="M503.1 272.8l1.6 2.8-1.6 2.8-1.6-2.8z" fill="#fff0f8"/>
<path d="M506.9 272.8l1.6 2.8-1.6 2.8-1.6-2.8z" fill="#f8f0b0"/>
<path d="M510.7 272.8l1.6 2.8-1.6 2.8-1.6-2.8z" fill="#f8d860"/>
<path d="M514.5 272.8l1.6 2.8-1.6 2.8-1.6-2.8z" fill="#f090c0"/>
<path d="M518.3 272.8l1.6 2.8-1.6 2.8-1.6-2.8z" fill="#e04060"/>
<path d="M522.1 272.8l1.6 2.8-1.6 2.8-1.6-2.8z" fill="#f8f0b0"/>
<path d="M525.9 272.8l1.6 2.8-1.6 2.8-1.6-2.8z" fill="#f0d0e0"/>
<path d="M529.7 272.8l1.6 2.8-1.6 2.8-1.6-2.8z" fill="#7070d0"/>
<path d="M533.5 272.8l1.6 2.8-1.6 2.8-1.6-2.8z" fill="#f8f0b0"/>
<path d="M537.3 272.8l1.6 2.8-1.6 2.8-1.6-2.8z" fill="#f0b050"/>
<path d="M541.1 272.8l1.6 2.8-1.6 2.8-1.6-2.8z" fill="#f8f0b0"/>
<path d="M544.9 272.8l1.6 2.8-1.6 2.8-1.6-2.8z" fill="#f090c0"/>
<path d="M548.7 272.8l1.6 2.8-1.6 2.8-1.6-2.8z" fill="#f0d0e0"/>
<path d="M552.5 272.8l1.6 2.8-1.6 2.8-1.6-2.8z" fill="#f8d860"/>
<path d="M556.3 272.8l1.6 2.8-1.6 2.8-1.6-2.8z" fill="#e04060"/>
<path d="M560.1 272.8l1.6 2.8-1.6 2.8-1.6-2.8z" fill="#50c080"/>
<path d="M563.9 272.8l1.6 2.8-1.6 2.8-1.6-2.8z" fill="#80d8e8"/>
<path d="M567.7 272.8l1.6 2.8-1.6 2.8-1.6-2.8z" fill="#70b0f0"/>
<path d="M571.5 272.8l1.6 2.8-1.6 2.8-1.6-2.8z" fill="#ffffff"/>
<path d="M575.3 272.8l1.6 2.8-1.6 2.8-1.6-2.8z" fill="#e04060"/>
<path d="M579.1 272.8l1.6 2.8-1.6 2.8-1.6-2.8z" fill="#f8f0f8"/>
<path d="M582.9 272.8l1.6 2.8-1.6 2.8-1.6-2.8z" fill="#5080e0"/>
<path d="M586.7 272.8l1.6 2.8-1.6 2.8-1.6-2.8z" fill="#e0f0ff"/>
<path d="M590.5 272.8l1.6 2.8-1.6 2.8-1.6-2.8z" fill="#f0b050"/>
<path d="M486.0 275.6l1.6 2.8-1.6 2.8-1.6-2.8z" fill="#80d8e8"/>
<path d="M489.8 275.6l1.6 2.8-1.6 2.8-1.6-2.8z" fill="#5080e0"/>
<path d="M493.6 275.6l1.6 2.8-1.6 2.8-1.6-2.8z" fill="#f8d860"/>
<path d="M497.4 275.6l1.6 2.8-1.6 2.8-1.6-2.8z" fill="#e0f0ff"/>
<path d="M501.2 275.6l1.6 2.8-1.6 2.8-1.6-2.8z" fill="#c080e0"/>
<path d="M505.0 275.6l1.6 2.8-1.6 2.8-1.6-2.8z" fill="#70b0f0"/>
<path d="M508.8 275.6l1.6 2.8-1.6 2.8-1.6-2.8z" fill="#50c080"/>
<path d="M512.6 275.6l1.6 2.8-1.6 2.8-1.6-2.8z" fill="#f8f8e0"/>
<path d="M516.4 275.6l1.6 2.8-1.6 2.8-1.6-2.8z" fill="#e0f0ff"/>
<path d="M520.2 275.6l1.6 2.8-1.6 2.8-1.6-2.8z" fill="#e8e8ff"/>
<path d="M524.0 275.6l1.6 2.8-1.6 2.8-1.6-2.8z" fill="#50c080"/>
<path d="M527.8 275.6l1.6 2.8-1.6 2.8-1.6-2.8z" fill="#f090c0"/>
<path d="M531.6 275.6l1.6 2.8-1.6 2.8-1.6-2.8z" fill="#50c080"/>
<path d="M535.4 275.6l1.6 2.8-1.6 2.8-1.6-2.8z" fill="#e04060"/>
<path d="M539.2 275.6l1.6 2.8-1.6 2.8-1.6-2.8z" fill="#f0b050"/>
<path d="M543.0 275.6l1.6 2.8-1.6 2.8-1.6-2.8z" fill="#70b0f0"/>
<path d="M546.8 275.6l1.6 2.8-1.6 2.8-1.6-2.8z" fill="#ffffff"/>
<path d="M550.6 275.6l1.6 2.8-1.6 2.8-1.6-2.8z" fill="#7070d0"/>
<path d="M554.4 275.6l1.6 2.8-1.6 2.8-1.6-2.8z" fill="#a0e090"/>
<path d="M558.2 275.6l1.6 2.8-1.6 2.8-1.6-2.8z" fill="#e0f0ff"/>
<path d="M562.0 275.6l1.6 2.8-1.6 2.8-1.6-2.8z" fill="#f0b050"/>
<path d="M565.8 275.6l1.6 2.8-1.6 2.8-1.6-2.8z" fill="#a0e090"/>
<path d="M569.6 275.6l1.6 2.8-1.6 2.8-1.6-2.8z" fill="#80d8e8"/>
<path d="M573.4 275.6l1.6 2.8-1.6 2.8-1.6-2.8z" fill="#f8f0b0"/>
<path d="M577.2 275.6l1.6 2.8-1.6 2.8-1.6-2.8z" fill="#ffffff"/>
<path d="M581.0 275.6l1.6 2.8-1.6 2.8-1.6-2.8z" fill="#f8f0f8"/>
<path d="M584.8 275.6l1.6 2.8-1.6 2.8-1.6-2.8z" fill="#80d8e8"/>
<path d="M588.6 275.6l1.6 2.8-1.6 2.8-1.6-2.8z" fill="#f8d860"/>
<path d="M592.4 275.6l1.6 2.8-1.6 2.8-1.6-2.8z" fill="#e8e8ff"/>
<path d="M487.9 278.4l1.6 2.8-1.6 2.8-1.6-2.8z" fill="#f8f0f8"/>
<path d="M491.7 278.4l1.6 2.8-1.6 2.8-1.6-2.8z" fill="#5080e0"/>
<path d="M495.5 278.4l1.6 2.8-1.6 2.8-1.6-2.8z" fill="#e8e8ff"/>
<path d="M499.3 278.4l1.6 2.8-1.6 2.8-1.6-2.8z" fill="#f05060"/>
<path d="M503.1 278.4l1.6 2.8-1.6 2.8-1.6-2.8z" fill="#f8f0f8"/>
<path d="M506.9 278.4l1.6 2.8-1.6 2.8-1.6-2.8z" fill="#f0d0e0"/>
<path d="M510.7 278.4l1.6 2.8-1.6 2.8-1.6-2.8z" fill="#e04060"/>
<path d="M514.5 278.4l1.6 2.8-1.6 2.8-1.6-2.8z" fill="#e04060"/>
<path d="M518.3 278.4l1.6 2.8-1.6 2.8-1.6-2.8z" fill="#f05060"/>
<path d="M522.1 278.4l1.6 2.8-1.6 2.8-1.6-2.8z" fill="#ffffff"/>
<path d="M525.9 278.4l1.6 2.8-1.6 2.8-1.6-2.8z" fill="#f8f0f8"/>
<path d="M529.7 278.4l1.6 2.8-1.6 2.8-1.6-2.8z" fill="#f8f0b0"/>
<path d="M533.5 278.4l1.6 2.8-1.6 2.8-1.6-2.8z" fill="#fff0f8"/>
<path d="M537.3 278.4l1.6 2.8-1.6 2.8-1.6-2.8z" fill="#c080e0"/>
<path d="M541.1 278.4l1.6 2.8-1.6 2.8-1.6-2.8z" fill="#f8f0b0"/>
<path d="M544.9 278.4l1.6 2.8-1.6 2.8-1.6-2.8z" fill="#5080e0"/>
<path d="M548.7 278.4l1.6 2.8-1.6 2.8-1.6-2.8z" fill="#70b0f0"/>
<path d="M552.5 278.4l1.6 2.8-1.6 2.8-1.6-2.8z" fill="#f0b050"/>
<path d="M556.3 278.4l1.6 2.8-1.6 2.8-1.6-2.8z" fill="#70b0f0"/>
<path d="M560.1 278.4l1.6 2.8-1.6 2.8-1.6-2.8z" fill="#5080e0"/>
<path d="M563.9 278.4l1.6 2.8-1.6 2.8-1.6-2.8z" fill="#f090c0"/>
<path d="M567.7 278.4l1.6 2.8-1.6 2.8-1.6-2.8z" fill="#f090c0"/>
<path d="M571.5 278.4l1.6 2.8-1.6 2.8-1.6-2.8z" fill="#e84070"/>
<path d="M575.3 278.4l1.6 2.8-1.6 2.8-1.6-2.8z" fill="#a0e090"/>
<path d="M579.1 278.4l1.6 2.8-1.6 2.8-1.6-2.8z" fill="#f090c0"/>
<path d="M582.9 278.4l1.6 2.8-1.6 2.8-1.6-2.8z" fill="#50c080"/>
<path d="M586.7 278.4l1.6 2.8-1.6 2.8-1.6-2.8z" fill="#80d8e8"/>
<path d="M590.5 278.4l1.6 2.8-1.6 2.8-1.6-2.8z" fill="#e0f0ff"/>
<path d="M486.0 281.2l1.6 2.8-1.6 2.8-1.6-2.8z" fill="#f090c0"/>
<path d="M489.8 281.2l1.6 2.8-1.6 2.8-1.6-2.8z" fill="#ffffff"/>
<path d="M493.6 281.2l1.6 2.8-1.6 2.8-1.6-2.8z" fill="#50c080"/>
<path d="M497.4 281.2l1.6 2.8-1.6 2.8-1.6-2.8z" fill="#f0d0e0"/>
<path d="M501.2 281.2l1.6 2.8-1.6 2.8-1.6-2.8z" fill="#f8f0b0"/>
<path d="M505.0 281.2l1.6 2.8-1.6 2.8-1.6-2.8z" fill="#d0e8f8"/>
<path d="M508.8 281.2l1.6 2.8-1.6 2.8-1.6-2.8z" fill="#7070d0"/>
<path d="M512.6 281.2l1.6 2.8-1.6 2.8-1.6-2.8z" fill="#f8f0f8"/>
<path d="M516.4 281.2l1.6 2.8-1.6 2.8-1.6-2.8z" fill="#5080e0"/>
<path d="M520.2 281.2l1.6 2.8-1.6 2.8-1.6-2.8z" fill="#f090c0"/>
<path d="M524.0 281.2l1.6 2.8-1.6 2.8-1.6-2.8z" fill="#e84070"/>
<path d="M527.8 281.2l1.6 2.8-1.6 2.8-1.6-2.8z" fill="#a0e090"/>
<path d="M531.6 281.2l1.6 2.8-1.6 2.8-1.6-2.8z" fill="#80d8e8"/>
<path d="M535.4 281.2l1.6 2.8-1.6 2.8-1.6-2.8z" fill="#5080e0"/>
<path d="M539.2 281.2l1.6 2.8-1.6 2.8-1.6-2.8z" fill="#f090c0"/>
<path d="M543.0 281.2l1.6 2.8-1.6 2.8-1.6-2.8z" fill="#f05060"/>
<path d="M546.8 281.2l1.6 2.8-1.6 2.8-1.6-2.8z" fill="#f8f8e0"/>
<path d="M550.6 281.2l1.6 2.8-1.6 2.8-1.6-2.8z" fill="#5080e0"/>
<path d="M554.4 281.2l1.6 2.8-1.6 2.8-1.6-2.8z" fill="#f090c0"/>
<path d="M558.2 281.2l1.6 2.8-1.6 2.8-1.6-2.8z" fill="#5080e0"/>
<path d="M562.0 281.2l1.6 2.8-1.6 2.8-1.6-2.8z" fill="#fff0f8"/>
<path d="M565.8 281.2l1.6 2.8-1.6 2.8-1.6-2.8z" fill="#f0b050"/>
<path d="M569.6 281.2l1.6 2.8-1.6 2.8-1.6-2.8z" fill="#5080e0"/>
<path d="M573.4 281.2l1.6 2.8-1.6 2.8-1.6-2.8z" fill="#f090c0"/>
<path d="M577.2 281.2l1.6 2.8-1.6 2.8-1.6-2.8z" fill="#70b0f0"/>
<path d="M581.0 281.2l1.6 2.8-1.6 2.8-1.6-2.8z" fill="#e04060"/>
<path d="M584.8 281.2l1.6 2.8-1.6 2.8-1.6-2.8z" fill="#f05060"/>
<path d="M588.6 281.2l1.6 2.8-1.6 2.8-1.6-2.8z" fill="#f8f0f8"/>
<path d="M592.4 281.2l1.6 2.8-1.6 2.8-1.6-2.8z" fill="#f0d0e0"/>
<path d="M487.9 284.0l1.6 2.8-1.6 2.8-1.6-2.8z" fill="#80d8e8"/>
<path d="M491.7 284.0l1.6 2.8-1.6 2.8-1.6-2.8z" fill="#f090c0"/>
<path d="M495.5 284.0l1.6 2.8-1.6 2.8-1.6-2.8z" fill="#fff0f8"/>
<path d="M499.3 284.0l1.6 2.8-1.6 2.8-1.6-2.8z" fill="#50c080"/>
<path d="M503.1 284.0l1.6 2.8-1.6 2.8-1.6-2.8z" fill="#e84070"/>
<path d="M506.9 284.0l1.6 2.8-1.6 2.8-1.6-2.8z" fill="#f8f0b0"/>
<path d="M510.7 284.0l1.6 2.8-1.6 2.8-1.6-2.8z" fill="#f0b050"/>
<path d="M514.5 284.0l1.6 2.8-1.6 2.8-1.6-2.8z" fill="#70b0f0"/>
<path d="M518.3 284.0l1.6 2.8-1.6 2.8-1.6-2.8z" fill="#a0e090"/>
<path d="M522.1 284.0l1.6 2.8-1.6 2.8-1.6-2.8z" fill="#f090c0"/>
<path d="M525.9 284.0l1.6 2.8-1.6 2.8-1.6-2.8z" fill="#e84070"/>
<path d="M529.7 284.0l1.6 2.8-1.6 2.8-1.6-2.8z" fill="#a0e090"/>
<path d="M533.5 284.0l1.6 2.8-1.6 2.8-1.6-2.8z" fill="#f8d860"/>
<path d="M537.3 284.0l1.6 2.8-1.6 2.8-1.6-2.8z" fill="#c080e0"/>
<path d="M541.1 284.0l1.6 2.8-1.6 2.8-1.6-2.8z" fill="#f8f8e0"/>
<path d="M544.9 284.0l1.6 2.8-1.6 2.8-1.6-2.8z" fill="#c080e0"/>
<path d="M548.7 284.0l1.6 2.8-1.6 2.8-1.6-2.8z" fill="#f8f0b0"/>
<path d="M552.5 284.0l1.6 2.8-1.6 2.8-1.6-2.8z" fill="#f8d860"/>
<path d="M556.3 284.0l1.6 2.8-1.6 2.8-1.6-2.8z" fill="#c080e0"/>
<path d="M560.1 284.0l1.6 2.8-1.6 2.8-1.6-2.8z" fill="#e04060"/>
<path d="M563.9 284.0l1.6 2.8-1.6 2.8-1.6-2.8z" fill="#f8f0b0"/>
<path d="M567.7 284.0l1.6 2.8-1.6 2.8-1.6-2.8z" fill="#e0f0ff"/>
<path d="M571.5 284.0l1.6 2.8-1.6 2.8-1.6-2.8z" fill="#a0e090"/>
<path d="M575.3 284.0l1.6 2.8-1.6 2.8-1.6-2.8z" fill="#f090c0"/>
<path d="M579.1 284.0l1.6 2.8-1.6 2.8-1.6-2.8z" fill="#e8e8ff"/>
<path d="M582.9 284.0l1.6 2.8-1.6 2.8-1.6-2.8z" fill="#f05060"/>
<path d="M586.7 284.0l1.6 2.8-1.6 2.8-1.6-2.8z" fill="#f090c0"/>
<path d="M590.5 284.0l1.6 2.8-1.6 2.8-1.6-2.8z" fill="#e84070"/>
<path d="M486.0 286.8l1.6 2.8-1.6 2.8-1.6-2.8z" fill="#f05060"/>
<path d="M489.8 286.8l1.6 2.8-1.6 2.8-1.6-2.8z" fill="#f05060"/>
<path d="M493.6 286.8l1.6 2.8-1.6 2.8-1.6-2.8z" fill="#f8f0b0"/>
<path d="M497.4 286.8l1.6 2.8-1.6 2.8-1.6-2.8z" fill="#f0d0e0"/>
<path d="M501.2 286.8l1.6 2.8-1.6 2.8-1.6-2.8z" fill="#f8d860"/>
<path d="M505.0 286.8l1.6 2.8-1.6 2.8-1.6-2.8z" fill="#f8f0b0"/>
<path d="M508.8 286.8l1.6 2.8-1.6 2.8-1.6-2.8z" fill="#7070d0"/>
<path d="M512.6 286.8l1.6 2.8-1.6 2.8-1.6-2.8z" fill="#f0b050"/>
<path d="M516.4 286.8l1.6 2.8-1.6 2.8-1.6-2.8z" fill="#e04060"/>
<path d="M520.2 286.8l1.6 2.8-1.6 2.8-1.6-2.8z" fill="#70b0f0"/>
<path d="M524.0 286.8l1.6 2.8-1.6 2.8-1.6-2.8z" fill="#e0f0ff"/>
<path d="M527.8 286.8l1.6 2.8-1.6 2.8-1.6-2.8z" fill="#f8f8e0"/>
<path d="M531.6 286.8l1.6 2.8-1.6 2.8-1.6-2.8z" fill="#80d8e8"/>
<path d="M535.4 286.8l1.6 2.8-1.6 2.8-1.6-2.8z" fill="#e0f0ff"/>
<path d="M539.2 286.8l1.6 2.8-1.6 2.8-1.6-2.8z" fill="#7070d0"/>
<path d="M543.0 286.8l1.6 2.8-1.6 2.8-1.6-2.8z" fill="#f0d0e0"/>
<path d="M546.8 286.8l1.6 2.8-1.6 2.8-1.6-2.8z" fill="#ffffff"/>
<path d="M550.6 286.8l1.6 2.8-1.6 2.8-1.6-2.8z" fill="#f8f0b0"/>
<path d="M554.4 286.8l1.6 2.8-1.6 2.8-1.6-2.8z" fill="#c080e0"/>
<path d="M558.2 286.8l1.6 2.8-1.6 2.8-1.6-2.8z" fill="#f8d860"/>
<path d="M562.0 286.8l1.6 2.8-1.6 2.8-1.6-2.8z" fill="#f0b050"/>
<path d="M565.8 286.8l1.6 2.8-1.6 2.8-1.6-2.8z" fill="#f8f0f8"/>
<path d="M569.6 286.8l1.6 2.8-1.6 2.8-1.6-2.8z" fill="#f8d860"/>
<path d="M573.4 286.8l1.6 2.8-1.6 2.8-1.6-2.8z" fill="#f8f8e0"/>
<path d="M577.2 286.8l1.6 2.8-1.6 2.8-1.6-2.8z" fill="#50c080"/>
<path d="M581.0 286.8l1.6 2.8-1.6 2.8-1.6-2.8z" fill="#ffffff"/>
<path d="M584.8 286.8l1.6 2.8-1.6 2.8-1.6-2.8z" fill="#e8e8ff"/>
<path d="M588.6 286.8l1.6 2.8-1.6 2.8-1.6-2.8z" fill="#e84070"/>
<path d="M592.4 286.8l1.6 2.8-1.6 2.8-1.6-2.8z" fill="#50c080"/>
<path d="M487.9 289.6l1.6 2.8-1.6 2.8-1.6-2.8z" fill="#f05060"/>
<path d="M491.7 289.6l1.6 2.8-1.6 2.8-1.6-2.8z" fill="#5080e0"/>
<path d="M495.5 289.6l1.6 2.8-1.6 2.8-1.6-2.8z" fill="#f8f8e0"/>
<path d="M499.3 289.6l1.6 2.8-1.6 2.8-1.6-2.8z" fill="#f090c0"/>
<path d="M503.1 289.6l1.6 2.8-1.6 2.8-1.6-2.8z" fill="#80d8e8"/>
<path d="M506.9 289.6l1.6 2.8-1.6 2.8-1.6-2.8z" fill="#a0e090"/>
<path d="M510.7 289.6l1.6 2.8-1.6 2.8-1.6-2.8z" fill="#e84070"/>
<path d="M514.5 289.6l1.6 2.8-1.6 2.8-1.6-2.8z" fill="#5080e0"/>
<path d="M518.3 289.6l1.6 2.8-1.6 2.8-1.6-2.8z" fill="#e0f0ff"/>
<path d="M522.1 289.6l1.6 2.8-1.6 2.8-1.6-2.8z" fill="#ffffff"/>
<path d="M525.9 289.6l1.6 2.8-1.6 2.8-1.6-2.8z" fill="#f8f0b0"/>
<path d="M529.7 289.6l1.6 2.8-1.6 2.8-1.6-2.8z" fill="#e0f0ff"/>
<path d="M533.5 289.6l1.6 2.8-1.6 2.8-1.6-2.8z" fill="#c080e0"/>
<path d="M537.3 289.6l1.6 2.8-1.6 2.8-1.6-2.8z" fill="#fff0f8"/>
<path d="M541.1 289.6l1.6 2.8-1.6 2.8-1.6-2.8z" fill="#f0b050"/>
<path d="M544.9 289.6l1.6 2.8-1.6 2.8-1.6-2.8z" fill="#c080e0"/>
<path d="M548.7 289.6l1.6 2.8-1.6 2.8-1.6-2.8z" fill="#e84070"/>
<path d="M552.5 289.6l1.6 2.8-1.6 2.8-1.6-2.8z" fill="#e04060"/>
<path d="M556.3 289.6l1.6 2.8-1.6 2.8-1.6-2.8z" fill="#a0e090"/>
<path d="M560.1 289.6l1.6 2.8-1.6 2.8-1.6-2.8z" fill="#a0e090"/>
<path d="M563.9 289.6l1.6 2.8-1.6 2.8-1.6-2.8z" fill="#f090c0"/>
<path d="M567.7 289.6l1.6 2.8-1.6 2.8-1.6-2.8z" fill="#e04060"/>
<path d="M571.5 289.6l1.6 2.8-1.6 2.8-1.6-2.8z" fill="#f05060"/>
<path d="M575.3 289.6l1.6 2.8-1.6 2.8-1.6-2.8z" fill="#f090c0"/>
<path d="M579.1 289.6l1.6 2.8-1.6 2.8-1.6-2.8z" fill="#e8e8ff"/>
<path d="M582.9 289.6l1.6 2.8-1.6 2.8-1.6-2.8z" fill="#f8f0f8"/>
<path d="M586.7 289.6l1.6 2.8-1.6 2.8-1.6-2.8z" fill="#f0d0e0"/>
<path d="M590.5 289.6l1.6 2.8-1.6 2.8-1.6-2.8z" fill="#f8f0f8"/>
<path d="M486.0 292.4l1.6 2.8-1.6 2.8-1.6-2.8z" fill="#f0b050"/>
<path d="M489.8 292.4l1.6 2.8-1.6 2.8-1.6-2.8z" fill="#e84070"/>
<path d="M493.6 292.4l1.6 2.8-1.6 2.8-1.6-2.8z" fill="#c080e0"/>
<path d="M497.4 292.4l1.6 2.8-1.6 2.8-1.6-2.8z" fill="#f8d860"/>
<path d="M501.2 292.4l1.6 2.8-1.6 2.8-1.6-2.8z" fill="#e8e8ff"/>
<path d="M505.0 292.4l1.6 2.8-1.6 2.8-1.6-2.8z" fill="#a0e090"/>
<path d="M508.8 292.4l1.6 2.8-1.6 2.8-1.6-2.8z" fill="#f05060"/>
<path d="M512.6 292.4l1.6 2.8-1.6 2.8-1.6-2.8z" fill="#f8f0f8"/>
<path d="M516.4 292.4l1.6 2.8-1.6 2.8-1.6-2.8z" fill="#ffffff"/>
<path d="M520.2 292.4l1.6 2.8-1.6 2.8-1.6-2.8z" fill="#5080e0"/>
<path d="M524.0 292.4l1.6 2.8-1.6 2.8-1.6-2.8z" fill="#7070d0"/>
<path d="M527.8 292.4l1.6 2.8-1.6 2.8-1.6-2.8z" fill="#f090c0"/>
<path d="M531.6 292.4l1.6 2.8-1.6 2.8-1.6-2.8z" fill="#f8f0b0"/>
<path d="M535.4 292.4l1.6 2.8-1.6 2.8-1.6-2.8z" fill="#f8f8e0"/>
<path d="M539.2 292.4l1.6 2.8-1.6 2.8-1.6-2.8z" fill="#f8d860"/>
<path d="M543.0 292.4l1.6 2.8-1.6 2.8-1.6-2.8z" fill="#f0b050"/>
<path d="M546.8 292.4l1.6 2.8-1.6 2.8-1.6-2.8z" fill="#f8f0b0"/>
<path d="M550.6 292.4l1.6 2.8-1.6 2.8-1.6-2.8z" fill="#f05060"/>
<path d="M554.4 292.4l1.6 2.8-1.6 2.8-1.6-2.8z" fill="#5080e0"/>
<path d="M558.2 292.4l1.6 2.8-1.6 2.8-1.6-2.8z" fill="#f090c0"/>
<path d="M562.0 292.4l1.6 2.8-1.6 2.8-1.6-2.8z" fill="#5080e0"/>
<path d="M565.8 292.4l1.6 2.8-1.6 2.8-1.6-2.8z" fill="#50c080"/>
<path d="M569.6 292.4l1.6 2.8-1.6 2.8-1.6-2.8z" fill="#ffffff"/>
<path d="M573.4 292.4l1.6 2.8-1.6 2.8-1.6-2.8z" fill="#d0e8f8"/>
<path d="M577.2 292.4l1.6 2.8-1.6 2.8-1.6-2.8z" fill="#e84070"/>
<path d="M581.0 292.4l1.6 2.8-1.6 2.8-1.6-2.8z" fill="#ffffff"/>
<path d="M584.8 292.4l1.6 2.8-1.6 2.8-1.6-2.8z" fill="#f05060"/>
<path d="M588.6 292.4l1.6 2.8-1.6 2.8-1.6-2.8z" fill="#c080e0"/>
<path d="M592.4 292.4l1.6 2.8-1.6 2.8-1.6-2.8z" fill="#c080e0"/>
<path d="M487.9 295.2l1.6 2.8-1.6 2.8-1.6-2.8z" fill="#f8f8e0"/>
<path d="M491.7 295.2l1.6 2.8-1.6 2.8-1.6-2.8z" fill="#f0b050"/>
<path d="M495.5 295.2l1.6 2.8-1.6 2.8-1.6-2.8z" fill="#5080e0"/>
<path d="M499.3 295.2l1.6 2.8-1.6 2.8-1.6-2.8z" fill="#d0e8f8"/>
<path d="M503.1 295.2l1.6 2.8-1.6 2.8-1.6-2.8z" fill="#f8f0b0"/>
<path d="M506.9 295.2l1.6 2.8-1.6 2.8-1.6-2.8z" fill="#50c080"/>
<path d="M510.7 295.2l1.6 2.8-1.6 2.8-1.6-2.8z" fill="#e0f0ff"/>
<path d="M514.5 295.2l1.6 2.8-1.6 2.8-1.6-2.8z" fill="#fff0f8"/>
<path d="M518.3 295.2l1.6 2.8-1.6 2.8-1.6-2.8z" fill="#ffffff"/>
<path d="M522.1 295.2l1.6 2.8-1.6 2.8-1.6-2.8z" fill="#f8f0f8"/>
<path d="M525.9 295.2l1.6 2.8-1.6 2.8-1.6-2.8z" fill="#7070d0"/>
<path d="M529.7 295.2l1.6 2.8-1.6 2.8-1.6-2.8z" fill="#50c080"/>
<path d="M533.5 295.2l1.6 2.8-1.6 2.8-1.6-2.8z" fill="#c080e0"/>
<path d="M537.3 295.2l1.6 2.8-1.6 2.8-1.6-2.8z" fill="#fff0f8"/>
<path d="M541.1 295.2l1.6 2.8-1.6 2.8-1.6-2.8z" fill="#f8f8e0"/>
<path d="M544.9 295.2l1.6 2.8-1.6 2.8-1.6-2.8z" fill="#50c080"/>
<path d="M548.7 295.2l1.6 2.8-1.6 2.8-1.6-2.8z" fill="#e84070"/>
<path d="M552.5 295.2l1.6 2.8-1.6 2.8-1.6-2.8z" fill="#f8f0b0"/>
<path d="M556.3 295.2l1.6 2.8-1.6 2.8-1.6-2.8z" fill="#f8f8e0"/>
<path d="M560.1 295.2l1.6 2.8-1.6 2.8-1.6-2.8z" fill="#80d8e8"/>
<path d="M563.9 295.2l1.6 2.8-1.6 2.8-1.6-2.8z" fill="#f8f0b0"/>
<path d="M567.7 295.2l1.6 2.8-1.6 2.8-1.6-2.8z" fill="#50c080"/>
<path d="M571.5 295.2l1.6 2.8-1.6 2.8-1.6-2.8z" fill="#f8f0b0"/>
<path d="M575.3 295.2l1.6 2.8-1.6 2.8-1.6-2.8z" fill="#f8f0b0"/>
<path d="M579.1 295.2l1.6 2.8-1.6 2.8-1.6-2.8z" fill="#d0e8f8"/>
<path d="M582.9 295.2l1.6 2.8-1.6 2.8-1.6-2.8z" fill="#f05060"/>
<path d="M586.7 295.2l1.6 2.8-1.6 2.8-1.6-2.8z" fill="#e0f0ff"/>
<path d="M590.5 295.2l1.6 2.8-1.6 2.8-1.6-2.8z" fill="#d0e8f8"/>
<path d="M486.0 298.0l1.6 2.8-1.6 2.8-1.6-2.8z" fill="#e0f0ff"/>
<path d="M489.8 298.0l1.6 2.8-1.6 2.8-1.6-2.8z" fill="#f8f8e0"/>
<path d="M493.6 298.0l1.6 2.8-1.6 2.8-1.6-2.8z" fill="#f0b050"/>
<path d="M497.4 298.0l1.6 2.8-1.6 2.8-1.6-2.8z" fill="#5080e0"/>
<path d="M501.2 298.0l1.6 2.8-1.6 2.8-1.6-2.8z" fill="#f05060"/>
<path d="M505.0 298.0l1.6 2.8-1.6 2.8-1.6-2.8z" fill="#e84070"/>
<path d="M508.8 298.0l1.6 2.8-1.6 2.8-1.6-2.8z" fill="#50c080"/>
<path d="M512.6 298.0l1.6 2.8-1.6 2.8-1.6-2.8z" fill="#f8f8e0"/>
<path d="M516.4 298.0l1.6 2.8-1.6 2.8-1.6-2.8z" fill="#e8e8ff"/>
<path d="M520.2 298.0l1.6 2.8-1.6 2.8-1.6-2.8z" fill="#70b0f0"/>
<path d="M524.0 298.0l1.6 2.8-1.6 2.8-1.6-2.8z" fill="#ffffff"/>
<path d="M527.8 298.0l1.6 2.8-1.6 2.8-1.6-2.8z" fill="#e04060"/>
<path d="M531.6 298.0l1.6 2.8-1.6 2.8-1.6-2.8z" fill="#f0d0e0"/>
<path d="M535.4 298.0l1.6 2.8-1.6 2.8-1.6-2.8z" fill="#e84070"/>
<path d="M539.2 298.0l1.6 2.8-1.6 2.8-1.6-2.8z" fill="#f8f8e0"/>
<path d="M543.0 298.0l1.6 2.8-1.6 2.8-1.6-2.8z" fill="#f05060"/>
<path d="M546.8 298.0l1.6 2.8-1.6 2.8-1.6-2.8z" fill="#f8f8e0"/>
<path d="M550.6 298.0l1.6 2.8-1.6 2.8-1.6-2.8z" fill="#f0d0e0"/>
<path d="M554.4 298.0l1.6 2.8-1.6 2.8-1.6-2.8z" fill="#e0f0ff"/>
<path d="M558.2 298.0l1.6 2.8-1.6 2.8-1.6-2.8z" fill="#f0b050"/>
<path d="M562.0 298.0l1.6 2.8-1.6 2.8-1.6-2.8z" fill="#7070d0"/>
<path d="M565.8 298.0l1.6 2.8-1.6 2.8-1.6-2.8z" fill="#f090c0"/>
<path d="M569.6 298.0l1.6 2.8-1.6 2.8-1.6-2.8z" fill="#f05060"/>
<path d="M573.4 298.0l1.6 2.8-1.6 2.8-1.6-2.8z" fill="#e04060"/>
<path d="M577.2 298.0l1.6 2.8-1.6 2.8-1.6-2.8z" fill="#5080e0"/>
<path d="M581.0 298.0l1.6 2.8-1.6 2.8-1.6-2.8z" fill="#f8f0b0"/>
<path d="M584.8 298.0l1.6 2.8-1.6 2.8-1.6-2.8z" fill="#f0d0e0"/>
<path d="M588.6 298.0l1.6 2.8-1.6 2.8-1.6-2.8z" fill="#5080e0"/>
<path d="M592.4 298.0l1.6 2.8-1.6 2.8-1.6-2.8z" fill="#e0f0ff"/>
<path d="M487.9 300.8l1.6 2.8-1.6 2.8-1.6-2.8z" fill="#f8f0b0"/>
<path d="M491.7 300.8l1.6 2.8-1.6 2.8-1.6-2.8z" fill="#5080e0"/>
<path d="M495.5 300.8l1.6 2.8-1.6 2.8-1.6-2.8z" fill="#7070d0"/>
<path d="M499.3 300.8l1.6 2.8-1.6 2.8-1.6-2.8z" fill="#f090c0"/>
<path d="M503.1 300.8l1.6 2.8-1.6 2.8-1.6-2.8z" fill="#5080e0"/>
<path d="M506.9 300.8l1.6 2.8-1.6 2.8-1.6-2.8z" fill="#f090c0"/>
<path d="M510.7 300.8l1.6 2.8-1.6 2.8-1.6-2.8z" fill="#f0b050"/>
<path d="M514.5 300.8l1.6 2.8-1.6 2.8-1.6-2.8z" fill="#f8d860"/>
<path d="M518.3 300.8l1.6 2.8-1.6 2.8-1.6-2.8z" fill="#f0b050"/>
<path d="M522.1 300.8l1.6 2.8-1.6 2.8-1.6-2.8z" fill="#f8f8e0"/>
<path d="M525.9 300.8l1.6 2.8-1.6 2.8-1.6-2.8z" fill="#e04060"/>
<path d="M529.7 300.8l1.6 2.8-1.6 2.8-1.6-2.8z" fill="#7070d0"/>
<path d="M533.5 300.8l1.6 2.8-1.6 2.8-1.6-2.8z" fill="#ffffff"/>
<path d="M537.3 300.8l1.6 2.8-1.6 2.8-1.6-2.8z" fill="#5080e0"/>
<path d="M541.1 300.8l1.6 2.8-1.6 2.8-1.6-2.8z" fill="#7070d0"/>
<path d="M544.9 300.8l1.6 2.8-1.6 2.8-1.6-2.8z" fill="#e0f0ff"/>
<path d="M548.7 300.8l1.6 2.8-1.6 2.8-1.6-2.8z" fill="#c080e0"/>
<path d="M552.5 300.8l1.6 2.8-1.6 2.8-1.6-2.8z" fill="#e84070"/>
<path d="M556.3 300.8l1.6 2.8-1.6 2.8-1.6-2.8z" fill="#fff0f8"/>
<path d="M560.1 300.8l1.6 2.8-1.6 2.8-1.6-2.8z" fill="#f8f8e0"/>
<path d="M563.9 300.8l1.6 2.8-1.6 2.8-1.6-2.8z" fill="#f8f8e0"/>
<path d="M567.7 300.8l1.6 2.8-1.6 2.8-1.6-2.8z" fill="#f8d860"/>
<path d="M571.5 300.8l1.6 2.8-1.6 2.8-1.6-2.8z" fill="#5080e0"/>
<path d="M575.3 300.8l1.6 2.8-1.6 2.8-1.6-2.8z" fill="#fff0f8"/>
<path d="M579.1 300.8l1.6 2.8-1.6 2.8-1.6-2.8z" fill="#50c080"/>
<path d="M582.9 300.8l1.6 2.8-1.6 2.8-1.6-2.8z" fill="#f8f0f8"/>
<path d="M586.7 300.8l1.6 2.8-1.6 2.8-1.6-2.8z" fill="#f090c0"/>
<path d="M590.5 300.8l1.6 2.8-1.6 2.8-1.6-2.8z" fill="#f8f8e0"/>
<path d="M486.0 303.6l1.6 2.8-1.6 2.8-1.6-2.8z" fill="#c080e0"/>
<path d="M489.8 303.6l1.6 2.8-1.6 2.8-1.6-2.8z" fill="#fff0f8"/>
<path d="M493.6 303.6l1.6 2.8-1.6 2.8-1.6-2.8z" fill="#d0e8f8"/>
<path d="M497.4 303.6l1.6 2.8-1.6 2.8-1.6-2.8z" fill="#50c080"/>
<path d="M501.2 303.6l1.6 2.8-1.6 2.8-1.6-2.8z" fill="#f05060"/>
<path d="M505.0 303.6l1.6 2.8-1.6 2.8-1.6-2.8z" fill="#7070d0"/>
<path d="M508.8 303.6l1.6 2.8-1.6 2.8-1.6-2.8z" fill="#e84070"/>
<path d="M512.6 303.6l1.6 2.8-1.6 2.8-1.6-2.8z" fill="#7070d0"/>
<path d="M516.4 303.6l1.6 2.8-1.6 2.8-1.6-2.8z" fill="#f090c0"/>
<path d="M520.2 303.6l1.6 2.8-1.6 2.8-1.6-2.8z" fill="#e0f0ff"/>
<path d="M524.0 303.6l1.6 2.8-1.6 2.8-1.6-2.8z" fill="#70b0f0"/>
<path d="M527.8 303.6l1.6 2.8-1.6 2.8-1.6-2.8z" fill="#f8d860"/>
<path d="M531.6 303.6l1.6 2.8-1.6 2.8-1.6-2.8z" fill="#e0f0ff"/>
<path d="M535.4 303.6l1.6 2.8-1.6 2.8-1.6-2.8z" fill="#7070d0"/>
<path d="M539.2 303.6l1.6 2.8-1.6 2.8-1.6-2.8z" fill="#c080e0"/>
<path d="M543.0 303.6l1.6 2.8-1.6 2.8-1.6-2.8z" fill="#f8f0b0"/>
<path d="M546.8 303.6l1.6 2.8-1.6 2.8-1.6-2.8z" fill="#c080e0"/>
<path d="M550.6 303.6l1.6 2.8-1.6 2.8-1.6-2.8z" fill="#e04060"/>
<path d="M554.4 303.6l1.6 2.8-1.6 2.8-1.6-2.8z" fill="#e04060"/>
<path d="M558.2 303.6l1.6 2.8-1.6 2.8-1.6-2.8z" fill="#e04060"/>
<path d="M562.0 303.6l1.6 2.8-1.6 2.8-1.6-2.8z" fill="#70b0f0"/>
<path d="M565.8 303.6l1.6 2.8-1.6 2.8-1.6-2.8z" fill="#f0d0e0"/>
<path d="M569.6 303.6l1.6 2.8-1.6 2.8-1.6-2.8z" fill="#f8d860"/>
<path d="M573.4 303.6l1.6 2.8-1.6 2.8-1.6-2.8z" fill="#c080e0"/>
<path d="M577.2 303.6l1.6 2.8-1.6 2.8-1.6-2.8z" fill="#5080e0"/>
<path d="M581.0 303.6l1.6 2.8-1.6 2.8-1.6-2.8z" fill="#7070d0"/>
<path d="M584.8 303.6l1.6 2.8-1.6 2.8-1.6-2.8z" fill="#f05060"/>
<path d="M588.6 303.6l1.6 2.8-1.6 2.8-1.6-2.8z" fill="#c080e0"/>
<path d="M592.4 303.6l1.6 2.8-1.6 2.8-1.6-2.8z" fill="#e04060"/>
<path d="M487.9 306.4l1.6 2.8-1.6 2.8-1.6-2.8z" fill="#5080e0"/>
<path d="M491.7 306.4l1.6 2.8-1.6 2.8-1.6-2.8z" fill="#f8f0b0"/>
<path d="M495.5 306.4l1.6 2.8-1.6 2.8-1.6-2.8z" fill="#e04060"/>
<path d="M499.3 306.4l1.6 2.8-1.6 2.8-1.6-2.8z" fill="#f090c0"/>
<path d="M503.1 306.4l1.6 2.8-1.6 2.8-1.6-2.8z" fill="#ffffff"/>
<path d="M506.9 306.4l1.6 2.8-1.6 2.8-1.6-2.8z" fill="#f8d860"/>
<path d="M510.7 306.4l1.6 2.8-1.6 2.8-1.6-2.8z" fill="#f8d860"/>
<path d="M514.5 306.4l1.6 2.8-1.6 2.8-1.6-2.8z" fill="#5080e0"/>
<path d="M518.3 306.4l1.6 2.8-1.6 2.8-1.6-2.8z" fill="#d0e8f8"/>
<path d="M522.1 306.4l1.6 2.8-1.6 2.8-1.6-2.8z" fill="#5080e0"/>
<path d="M525.9 306.4l1.6 2.8-1.6 2.8-1.6-2.8z" fill="#50c080"/>
<path d="M529.7 306.4l1.6 2.8-1.6 2.8-1.6-2.8z" fill="#f8f0b0"/>
<path d="M533.5 306.4l1.6 2.8-1.6 2.8-1.6-2.8z" fill="#f090c0"/>
<path d="M537.3 306.4l1.6 2.8-1.6 2.8-1.6-2.8z" fill="#e8e8ff"/>
<path d="M541.1 306.4l1.6 2.8-1.6 2.8-1.6-2.8z" fill="#50c080"/>
<path d="M544.9 306.4l1.6 2.8-1.6 2.8-1.6-2.8z" fill="#fff0f8"/>
<path d="M548.7 306.4l1.6 2.8-1.6 2.8-1.6-2.8z" fill="#f8f8e0"/>
<path d="M552.5 306.4l1.6 2.8-1.6 2.8-1.6-2.8z" fill="#f8f0b0"/>
<path d="M556.3 306.4l1.6 2.8-1.6 2.8-1.6-2.8z" fill="#f090c0"/>
<path d="M560.1 306.4l1.6 2.8-1.6 2.8-1.6-2.8z" fill="#70b0f0"/>
<path d="M563.9 306.4l1.6 2.8-1.6 2.8-1.6-2.8z" fill="#e8e8ff"/>
<path d="M567.7 306.4l1.6 2.8-1.6 2.8-1.6-2.8z" fill="#f0b050"/>
<path d="M571.5 306.4l1.6 2.8-1.6 2.8-1.6-2.8z" fill="#7070d0"/>
<path d="M575.3 306.4l1.6 2.8-1.6 2.8-1.6-2.8z" fill="#7070d0"/>
<path d="M579.1 306.4l1.6 2.8-1.6 2.8-1.6-2.8z" fill="#ffffff"/>
<path d="M582.9 306.4l1.6 2.8-1.6 2.8-1.6-2.8z" fill="#f05060"/>
<path d="M586.7 306.4l1.6 2.8-1.6 2.8-1.6-2.8z" fill="#a0e090"/>
<path d="M590.5 306.4l1.6 2.8-1.6 2.8-1.6-2.8z" fill="#f05060"/>
<path d="M486.0 309.2l1.6 2.8-1.6 2.8-1.6-2.8z" fill="#7070d0"/>
<path d="M489.8 309.2l1.6 2.8-1.6 2.8-1.6-2.8z" fill="#e0f0ff"/>
<path d="M493.6 309.2l1.6 2.8-1.6 2.8-1.6-2.8z" fill="#e04060"/>
<path d="M497.4 309.2l1.6 2.8-1.6 2.8-1.6-2.8z" fill="#ffffff"/>
<path d="M501.2 309.2l1.6 2.8-1.6 2.8-1.6-2.8z" fill="#c080e0"/>
<path d="M505.0 309.2l1.6 2.8-1.6 2.8-1.6-2.8z" fill="#50c080"/>
<path d="M508.8 309.2l1.6 2.8-1.6 2.8-1.6-2.8z" fill="#80d8e8"/>
<path d="M512.6 309.2l1.6 2.8-1.6 2.8-1.6-2.8z" fill="#e8e8ff"/>
<path d="M516.4 309.2l1.6 2.8-1.6 2.8-1.6-2.8z" fill="#ffffff"/>
<path d="M520.2 309.2l1.6 2.8-1.6 2.8-1.6-2.8z" fill="#f8f0f8"/>
<path d="M524.0 309.2l1.6 2.8-1.6 2.8-1.6-2.8z" fill="#70b0f0"/>
<path d="M527.8 309.2l1.6 2.8-1.6 2.8-1.6-2.8z" fill="#f8f0f8"/>
<path d="M531.6 309.2l1.6 2.8-1.6 2.8-1.6-2.8z" fill="#f05060"/>
<path d="M535.4 309.2l1.6 2.8-1.6 2.8-1.6-2.8z" fill="#f8f0f8"/>
<path d="M539.2 309.2l1.6 2.8-1.6 2.8-1.6-2.8z" fill="#f8f0f8"/>
<path d="M543.0 309.2l1.6 2.8-1.6 2.8-1.6-2.8z" fill="#ffffff"/>
<path d="M546.8 309.2l1.6 2.8-1.6 2.8-1.6-2.8z" fill="#70b0f0"/>
<path d="M550.6 309.2l1.6 2.8-1.6 2.8-1.6-2.8z" fill="#f8d860"/>
<path d="M554.4 309.2l1.6 2.8-1.6 2.8-1.6-2.8z" fill="#f05060"/>
<path d="M558.2 309.2l1.6 2.8-1.6 2.8-1.6-2.8z" fill="#c080e0"/>
<path d="M562.0 309.2l1.6 2.8-1.6 2.8-1.6-2.8z" fill="#f090c0"/>
<path d="M565.8 309.2l1.6 2.8-1.6 2.8-1.6-2.8z" fill="#e8e8ff"/>
<path d="M569.6 309.2l1.6 2.8-1.6 2.8-1.6-2.8z" fill="#5080e0"/>
<path d="M573.4 309.2l1.6 2.8-1.6 2.8-1.6-2.8z" fill="#ffffff"/>
<path d="M577.2 309.2l1.6 2.8-1.6 2.8-1.6-2.8z" fill="#ffffff"/>
<path d="M581.0 309.2l1.6 2.8-1.6 2.8-1.6-2.8z" fill="#d0e8f8"/>
<path d="M584.8 309.2l1.6 2.8-1.6 2.8-1.6-2.8z" fill="#5080e0"/>
<path d="M588.6 309.2l1.6 2.8-1.6 2.8-1.6-2.8z" fill="#e8e8ff"/>
<path d="M592.4 309.2l1.6 2.8-1.6 2.8-1.6-2.8z" fill="#80d8e8"/>
<path d="M487.9 312.0l1.6 2.8-1.6 2.8-1.6-2.8z" fill="#f090c0"/>
<path d="M491.7 312.0l1.6 2.8-1.6 2.8-1.6-2.8z" fill="#e84070"/>
<path d="M495.5 312.0l1.6 2.8-1.6 2.8-1.6-2.8z" fill="#f090c0"/>
<path d="M499.3 312.0l1.6 2.8-1.6 2.8-1.6-2.8z" fill="#70b0f0"/>
<path d="M503.1 312.0l1.6 2.8-1.6 2.8-1.6-2.8z" fill="#e84070"/>
<path d="M506.9 312.0l1.6 2.8-1.6 2.8-1.6-2.8z" fill="#e0f0ff"/>
<path d="M510.7 312.0l1.6 2.8-1.6 2.8-1.6-2.8z" fill="#c080e0"/>
<path d="M514.5 312.0l1.6 2.8-1.6 2.8-1.6-2.8z" fill="#f8f8e0"/>
<path d="M518.3 312.0l1.6 2.8-1.6 2.8-1.6-2.8z" fill="#50c080"/>
<path d="M522.1 312.0l1.6 2.8-1.6 2.8-1.6-2.8z" fill="#f0b050"/>
<path d="M525.9 312.0l1.6 2.8-1.6 2.8-1.6-2.8z" fill="#f090c0"/>
<path d="M529.7 312.0l1.6 2.8-1.6 2.8-1.6-2.8z" fill="#80d8e8"/>
<path d="M533.5 312.0l1.6 2.8-1.6 2.8-1.6-2.8z" fill="#f8f0b0"/>
<path d="M537.3 312.0l1.6 2.8-1.6 2.8-1.6-2.8z" fill="#f8f0f8"/>
<path d="M541.1 312.0l1.6 2.8-1.6 2.8-1.6-2.8z" fill="#f8d860"/>
<path d="M544.9 312.0l1.6 2.8-1.6 2.8-1.6-2.8z" fill="#e8e8ff"/>
<path d="M548.7 312.0l1.6 2.8-1.6 2.8-1.6-2.8z" fill="#80d8e8"/>
<path d="M552.5 312.0l1.6 2.8-1.6 2.8-1.6-2.8z" fill="#f05060"/>
<path d="M556.3 312.0l1.6 2.8-1.6 2.8-1.6-2.8z" fill="#f8f8e0"/>
<path d="M560.1 312.0l1.6 2.8-1.6 2.8-1.6-2.8z" fill="#ffffff"/>
<path d="M563.9 312.0l1.6 2.8-1.6 2.8-1.6-2.8z" fill="#f0d0e0"/>
<path d="M567.7 312.0l1.6 2.8-1.6 2.8-1.6-2.8z" fill="#f0d0e0"/>
<path d="M571.5 312.0l1.6 2.8-1.6 2.8-1.6-2.8z" fill="#f8d860"/>
<path d="M575.3 312.0l1.6 2.8-1.6 2.8-1.6-2.8z" fill="#5080e0"/>
<path d="M579.1 312.0l1.6 2.8-1.6 2.8-1.6-2.8z" fill="#e84070"/>
<path d="M582.9 312.0l1.6 2.8-1.6 2.8-1.6-2.8z" fill="#80d8e8"/>
<path d="M586.7 312.0l1.6 2.8-1.6 2.8-1.6-2.8z" fill="#e04060"/>
<path d="M590.5 312.0l1.6 2.8-1.6 2.8-1.6-2.8z" fill="#fff0f8"/>
<path d="M486.0 314.8l1.6 2.8-1.6 2.8-1.6-2.8z" fill="#50c080"/>
<path d="M489.8 314.8l1.6 2.8-1.6 2.8-1.6-2.8z" fill="#f8f8e0"/>
<path d="M493.6 314.8l1.6 2.8-1.6 2.8-1.6-2.8z" fill="#c080e0"/>
<path d="M497.4 314.8l1.6 2.8-1.6 2.8-1.6-2.8z" fill="#7070d0"/>
<path d="M501.2 314.8l1.6 2.8-1.6 2.8-1.6-2.8z" fill="#e84070"/>
<path d="M505.0 314.8l1.6 2.8-1.6 2.8-1.6-2.8z" fill="#f0d0e0"/>
<path d="M508.8 314.8l1.6 2.8-1.6 2.8-1.6-2.8z" fill="#50c080"/>
<path d="M512.6 314.8l1.6 2.8-1.6 2.8-1.6-2.8z" fill="#a0e090"/>
<path d="M516.4 314.8l1.6 2.8-1.6 2.8-1.6-2.8z" fill="#7070d0"/>
<path d="M520.2 314.8l1.6 2.8-1.6 2.8-1.6-2.8z" fill="#80d8e8"/>
<path d="M524.0 314.8l1.6 2.8-1.6 2.8-1.6-2.8z" fill="#f8f0f8"/>
<path d="M527.8 314.8l1.6 2.8-1.6 2.8-1.6-2.8z" fill="#c080e0"/>
<path d="M531.6 314.8l1.6 2.8-1.6 2.8-1.6-2.8z" fill="#c080e0"/>
<path d="M535.4 314.8l1.6 2.8-1.6 2.8-1.6-2.8z" fill="#f090c0"/>
<path d="M539.2 314.8l1.6 2.8-1.6 2.8-1.6-2.8z" fill="#f8f8e0"/>
<path d="M543.0 314.8l1.6 2.8-1.6 2.8-1.6-2.8z" fill="#f090c0"/>
<path d="M546.8 314.8l1.6 2.8-1.6 2.8-1.6-2.8z" fill="#ffffff"/>
<path d="M550.6 314.8l1.6 2.8-1.6 2.8-1.6-2.8z" fill="#f8f8e0"/>
<path d="M554.4 314.8l1.6 2.8-1.6 2.8-1.6-2.8z" fill="#f0b050"/>
<path d="M558.2 314.8l1.6 2.8-1.6 2.8-1.6-2.8z" fill="#c080e0"/>
<path d="M562.0 314.8l1.6 2.8-1.6 2.8-1.6-2.8z" fill="#7070d0"/>
<path d="M565.8 314.8l1.6 2.8-1.6 2.8-1.6-2.8z" fill="#f0d0e0"/>
<path d="M569.6 314.8l1.6 2.8-1.6 2.8-1.6-2.8z" fill="#e0f0ff"/>
<path d="M573.4 314.8l1.6 2.8-1.6 2.8-1.6-2.8z" fill="#ffffff"/>
<path d="M577.2 314.8l1.6 2.8-1.6 2.8-1.6-2.8z" fill="#70b0f0"/>
<path d="M581.0 314.8l1.6 2.8-1.6 2.8-1.6-2.8z" fill="#a0e090"/>
<path d="M584.8 314.8l1.6 2.8-1.6 2.8-1.6-2.8z" fill="#f8f8e0"/>
<path d="M588.6 314.8l1.6 2.8-1.6 2.8-1.6-2.8z" fill="#a0e090"/>
<path d="M592.4 314.8l1.6 2.8-1.6 2.8-1.6-2.8z" fill="#5080e0"/>
<path d="M487.9 317.6l1.6 2.8-1.6 2.8-1.6-2.8z" fill="#f8d860"/>
<path d="M491.7 317.6l1.6 2.8-1.6 2.8-1.6-2.8z" fill="#f8f0b0"/>
<path d="M495.5 317.6l1.6 2.8-1.6 2.8-1.6-2.8z" fill="#7070d0"/>
<path d="M499.3 317.6l1.6 2.8-1.6 2.8-1.6-2.8z" fill="#f0d0e0"/>
<path d="M503.1 317.6l1.6 2.8-1.6 2.8-1.6-2.8z" fill="#f0b050"/>
<path d="M506.9 317.6l1.6 2.8-1.6 2.8-1.6-2.8z" fill="#e04060"/>
<path d="M510.7 317.6l1.6 2.8-1.6 2.8-1.6-2.8z" fill="#f8f0f8"/>
<path d="M514.5 317.6l1.6 2.8-1.6 2.8-1.6-2.8z" fill="#e04060"/>
<path d="M518.3 317.6l1.6 2.8-1.6 2.8-1.6-2.8z" fill="#80d8e8"/>
<path d="M522.1 317.6l1.6 2.8-1.6 2.8-1.6-2.8z" fill="#50c080"/>
<path d="M525.9 317.6l1.6 2.8-1.6 2.8-1.6-2.8z" fill="#f0d0e0"/>
<path d="M529.7 317.6l1.6 2.8-1.6 2.8-1.6-2.8z" fill="#f8d860"/>
<path d="M533.5 317.6l1.6 2.8-1.6 2.8-1.6-2.8z" fill="#f0b050"/>
<path d="M537.3 317.6l1.6 2.8-1.6 2.8-1.6-2.8z" fill="#5080e0"/>
<path d="M541.1 317.6l1.6 2.8-1.6 2.8-1.6-2.8z" fill="#a0e090"/>
<path d="M544.9 317.6l1.6 2.8-1.6 2.8-1.6-2.8z" fill="#f8f0f8"/>
<path d="M548.7 317.6l1.6 2.8-1.6 2.8-1.6-2.8z" fill="#f0d0e0"/>
<path d="M552.5 317.6l1.6 2.8-1.6 2.8-1.6-2.8z" fill="#5080e0"/>
<path d="M556.3 317.6l1.6 2.8-1.6 2.8-1.6-2.8z" fill="#f8f0f8"/>
<path d="M560.1 317.6l1.6 2.8-1.6 2.8-1.6-2.8z" fill="#f0b050"/>
<path d="M563.9 317.6l1.6 2.8-1.6 2.8-1.6-2.8z" fill="#e8e8ff"/>
<path d="M567.7 317.6l1.6 2.8-1.6 2.8-1.6-2.8z" fill="#f090c0"/>
<path d="M571.5 317.6l1.6 2.8-1.6 2.8-1.6-2.8z" fill="#d0e8f8"/>
<path d="M575.3 317.6l1.6 2.8-1.6 2.8-1.6-2.8z" fill="#f8d860"/>
<path d="M579.1 317.6l1.6 2.8-1.6 2.8-1.6-2.8z" fill="#f05060"/>
<path d="M582.9 317.6l1.6 2.8-1.6 2.8-1.6-2.8z" fill="#80d8e8"/>
<path d="M586.7 317.6l1.6 2.8-1.6 2.8-1.6-2.8z" fill="#ffffff"/>
<path d="M590.5 317.6l1.6 2.8-1.6 2.8-1.6-2.8z" fill="#80d8e8"/>
<path d="M486.0 320.4l1.6 2.8-1.6 2.8-1.6-2.8z" fill="#f8f0b0"/>
<path d="M489.8 320.4l1.6 2.8-1.6 2.8-1.6-2.8z" fill="#f8d860"/>
<path d="M493.6 320.4l1.6 2.8-1.6 2.8-1.6-2.8z" fill="#ffffff"/>
<path d="M497.4 320.4l1.6 2.8-1.6 2.8-1.6-2.8z" fill="#f090c0"/>
<path d="M501.2 320.4l1.6 2.8-1.6 2.8-1.6-2.8z" fill="#f8f0f8"/>
<path d="M505.0 320.4l1.6 2.8-1.6 2.8-1.6-2.8z" fill="#e84070"/>
<path d="M508.8 320.4l1.6 2.8-1.6 2.8-1.6-2.8z" fill="#7070d0"/>
<path d="M512.6 320.4l1.6 2.8-1.6 2.8-1.6-2.8z" fill="#f090c0"/>
<path d="M516.4 320.4l1.6 2.8-1.6 2.8-1.6-2.8z" fill="#d0e8f8"/>
<path d="M520.2 320.4l1.6 2.8-1.6 2.8-1.6-2.8z" fill="#e8e8ff"/>
<path d="M524.0 320.4l1.6 2.8-1.6 2.8-1.6-2.8z" fill="#50c080"/>
<path d="M527.8 320.4l1.6 2.8-1.6 2.8-1.6-2.8z" fill="#e0f0ff"/>
<path d="M531.6 320.4l1.6 2.8-1.6 2.8-1.6-2.8z" fill="#f8f0b0"/>
<path d="M535.4 320.4l1.6 2.8-1.6 2.8-1.6-2.8z" fill="#f8f0b0"/>
<path d="M539.2 320.4l1.6 2.8-1.6 2.8-1.6-2.8z" fill="#f8f8e0"/>
<path d="M543.0 320.4l1.6 2.8-1.6 2.8-1.6-2.8z" fill="#f8d860"/>
<path d="M546.8 320.4l1.6 2.8-1.6 2.8-1.6-2.8z" fill="#5080e0"/>
<path d="M550.6 320.4l1.6 2.8-1.6 2.8-1.6-2.8z" fill="#f090c0"/>
<path d="M554.4 320.4l1.6 2.8-1.6 2.8-1.6-2.8z" fill="#f0b050"/>
<path d="M558.2 320.4l1.6 2.8-1.6 2.8-1.6-2.8z" fill="#ffffff"/>
<path d="M562.0 320.4l1.6 2.8-1.6 2.8-1.6-2.8z" fill="#ffffff"/>
<path d="M565.8 320.4l1.6 2.8-1.6 2.8-1.6-2.8z" fill="#f8f8e0"/>
<path d="M569.6 320.4l1.6 2.8-1.6 2.8-1.6-2.8z" fill="#e04060"/>
<path d="M573.4 320.4l1.6 2.8-1.6 2.8-1.6-2.8z" fill="#80d8e8"/>
<path d="M577.2 320.4l1.6 2.8-1.6 2.8-1.6-2.8z" fill="#c080e0"/>
<path d="M581.0 320.4l1.6 2.8-1.6 2.8-1.6-2.8z" fill="#f05060"/>
<path d="M584.8 320.4l1.6 2.8-1.6 2.8-1.6-2.8z" fill="#50c080"/>
<path d="M588.6 320.4l1.6 2.8-1.6 2.8-1.6-2.8z" fill="#e84070"/>
<path d="M592.4 320.4l1.6 2.8-1.6 2.8-1.6-2.8z" fill="#80d8e8"/>
<path d="M487.9 323.2l1.6 2.8-1.6 2.8-1.6-2.8z" fill="#7070d0"/>
<path d="M491.7 323.2l1.6 2.8-1.6 2.8-1.6-2.8z" fill="#d0e8f8"/>
<path d="M495.5 323.2l1.6 2.8-1.6 2.8-1.6-2.8z" fill="#7070d0"/>
<path d="M499.3 323.2l1.6 2.8-1.6 2.8-1.6-2.8z" fill="#f05060"/>
<path d="M503.1 323.2l1.6 2.8-1.6 2.8-1.6-2.8z" fill="#5080e0"/>
<path d="M506.9 323.2l1.6 2.8-1.6 2.8-1.6-2.8z" fill="#ffffff"/>
<path d="M510.7 323.2l1.6 2.8-1.6 2.8-1.6-2.8z" fill="#f8f0b0"/>
<path d="M514.5 323.2l1.6 2.8-1.6 2.8-1.6-2.8z" fill="#e04060"/>
<path d="M518.3 323.2l1.6 2.8-1.6 2.8-1.6-2.8z" fill="#e04060"/>
<path d="M522.1 323.2l1.6 2.8-1.6 2.8-1.6-2.8z" fill="#f0b050"/>
<path d="M525.9 323.2l1.6 2.8-1.6 2.8-1.6-2.8z" fill="#70b0f0"/>
<path d="M529.7 323.2l1.6 2.8-1.6 2.8-1.6-2.8z" fill="#f0b050"/>
<path d="M533.5 323.2l1.6 2.8-1.6 2.8-1.6-2.8z" fill="#50c080"/>
<path d="M537.3 323.2l1.6 2.8-1.6 2.8-1.6-2.8z" fill="#50c080"/>
<path d="M541.1 323.2l1.6 2.8-1.6 2.8-1.6-2.8z" fill="#f8f0b0"/>
<path d="M544.9 323.2l1.6 2.8-1.6 2.8-1.6-2.8z" fill="#e0f0ff"/>
<path d="M548.7 323.2l1.6 2.8-1.6 2.8-1.6-2.8z" fill="#70b0f0"/>
<path d="M552.5 323.2l1.6 2.8-1.6 2.8-1.6-2.8z" fill="#f8f8e0"/>
<path d="M556.3 323.2l1.6 2.8-1.6 2.8-1.6-2.8z" fill="#e04060"/>
<path d="M560.1 323.2l1.6 2.8-1.6 2.8-1.6-2.8z" fill="#5080e0"/>
<path d="M563.9 323.2l1.6 2.8-1.6 2.8-1.6-2.8z" fill="#f0d0e0"/>
<path d="M567.7 323.2l1.6 2.8-1.6 2.8-1.6-2.8z" fill="#e84070"/>
<path d="M571.5 323.2l1.6 2.8-1.6 2.8-1.6-2.8z" fill="#f05060"/>
<path d="M575.3 323.2l1.6 2.8-1.6 2.8-1.6-2.8z" fill="#50c080"/>
<path d="M579.1 323.2l1.6 2.8-1.6 2.8-1.6-2.8z" fill="#f0b050"/>
<path d="M582.9 323.2l1.6 2.8-1.6 2.8-1.6-2.8z" fill="#d0e8f8"/>
<path d="M586.7 323.2l1.6 2.8-1.6 2.8-1.6-2.8z" fill="#e84070"/>
<path d="M590.5 323.2l1.6 2.8-1.6 2.8-1.6-2.8z" fill="#f8f8e0"/>
<path d="M486.0 326.0l1.6 2.8-1.6 2.8-1.6-2.8z" fill="#c080e0"/>
<path d="M489.8 326.0l1.6 2.8-1.6 2.8-1.6-2.8z" fill="#50c080"/>
<path d="M493.6 326.0l1.6 2.8-1.6 2.8-1.6-2.8z" fill="#f8f8e0"/>
<path d="M497.4 326.0l1.6 2.8-1.6 2.8-1.6-2.8z" fill="#f090c0"/>
<path d="M501.2 326.0l1.6 2.8-1.6 2.8-1.6-2.8z" fill="#f8f0b0"/>
<path d="M505.0 326.0l1.6 2.8-1.6 2.8-1.6-2.8z" fill="#f8f8e0"/>
<path d="M508.8 326.0l1.6 2.8-1.6 2.8-1.6-2.8z" fill="#80d8e8"/>
<path d="M512.6 326.0l1.6 2.8-1.6 2.8-1.6-2.8z" fill="#70b0f0"/>
<path d="M516.4 326.0l1.6 2.8-1.6 2.8-1.6-2.8z" fill="#70b0f0"/>
<path d="M520.2 326.0l1.6 2.8-1.6 2.8-1.6-2.8z" fill="#5080e0"/>
<path d="M524.0 326.0l1.6 2.8-1.6 2.8-1.6-2.8z" fill="#c080e0"/>
<path d="M527.8 326.0l1.6 2.8-1.6 2.8-1.6-2.8z" fill="#f8f0b0"/>
<path d="M531.6 326.0l1.6 2.8-1.6 2.8-1.6-2.8z" fill="#d0e8f8"/>
<path d="M535.4 326.0l1.6 2.8-1.6 2.8-1.6-2.8z" fill="#f8d860"/>
<path d="M539.2 326.0l1.6 2.8-1.6 2.8-1.6-2.8z" fill="#ffffff"/>
<path d="M543.0 326.0l1.6 2.8-1.6 2.8-1.6-2.8z" fill="#f090c0"/>
<path d="M546.8 326.0l1.6 2.8-1.6 2.8-1.6-2.8z" fill="#f0b050"/>
<path d="M550.6 326.0l1.6 2.8-1.6 2.8-1.6-2.8z" fill="#fff0f8"/>
<path d="M554.4 326.0l1.6 2.8-1.6 2.8-1.6-2.8z" fill="#f05060"/>
<path d="M558.2 326.0l1.6 2.8-1.6 2.8-1.6-2.8z" fill="#f05060"/>
<path d="M562.0 326.0l1.6 2.8-1.6 2.8-1.6-2.8z" fill="#f0d0e0"/>
<path d="M565.8 326.0l1.6 2.8-1.6 2.8-1.6-2.8z" fill="#c080e0"/>
<path d="M569.6 326.0l1.6 2.8-1.6 2.8-1.6-2.8z" fill="#e04060"/>
<path d="M573.4 326.0l1.6 2.8-1.6 2.8-1.6-2.8z" fill="#f090c0"/>
<path d="M577.2 326.0l1.6 2.8-1.6 2.8-1.6-2.8z" fill="#f8f0f8"/>
<path d="M581.0 326.0l1.6 2.8-1.6 2.8-1.6-2.8z" fill="#f8f8e0"/>
<path d="M584.8 326.0l1.6 2.8-1.6 2.8-1.6-2.8z" fill="#f0b050"/>
<path d="M588.6 326.0l1.6 2.8-1.6 2.8-1.6-2.8z" fill="#7070d0"/>
<path d="M592.4 326.0l1.6 2.8-1.6 2.8-1.6-2.8z" fill="#f8f0b0"/>
<path d="M486 305 C488 296 496 286 506 279 C503 286 500 292 499 298 C496 304 492 308 486 310 Z" fill="#f0c830"/><path d="M499 283 C497 292 497 304 501 314 L494 314 C490 306 490 296 494 289 Z" fill="#e8c040" opacity="0.5"/></g>
<circle cx="496.5" cy="294.5" r="3.6" fill="#5050a0" stroke="#d890b0" stroke-width="1.8"/>
<path d="M517 306 C530 300 548 296 562 296 C558 302 550 309 540 312 C530 313 522 311 517 306 Z" fill="#c88048"/>
<path d="M522 306 C533 302 545 300 558 297.5M524 308 C535 305 547 302 556 300M528 310 C538 307 548 304 553 302" stroke="#e8c8a0" stroke-width="0.6" fill="none"/>

<!-- selection box -->
<rect x="484.5" y="256.5" width="146" height="97" fill="none" stroke="#4a90e0" stroke-width="1"/>
<g fill="#fff" stroke="#4a90e0" stroke-width="0.8">
<circle cx="484.5" cy="256.5" r="3"/><circle cx="557.5" cy="256.5" r="3"/><circle cx="630.5" cy="256.5" r="3"/>
<circle cx="484.5" cy="305" r="3"/><circle cx="630.5" cy="305" r="3"/>
<circle cx="484.5" cy="353.5" r="3"/><circle cx="557.5" cy="353.5" r="3"/><circle cx="630.5" cy="353.5" r="3"/>
</g>
<!-- anchor -->
<path d="M557.5 302v7M554 305.5h7M555 303l5 5M560 303l-5 5" stroke="#3a8ef0" stroke-width="1.2"/>
<!-- motion path dots -->
<path d="M580 331 L695 469" stroke="#3a8ef0" stroke-width="1.5" stroke-dasharray="1.6 7.3"/>
<path d="M672 439l3 3-3 3-3-3z" fill="#3a8ef0"/>
<path d="M692.2 466.8h5.8l-1.3 2.6 1.3 2.6h-5.8l1.3-2.6z" fill="#3a8ef0"/>
<!-- red arrow -->
<path d="M648 464 L567 382" stroke="#f00" stroke-width="3.4" stroke-linecap="round"/>
<path d="M554.9 366.9 L576.6 377.5 L568.3 380.6 L564.4 388.8 Z" fill="#f00"/>
<!-- drag text -->
<text x="513" y="428" font-family="Liberation Sans" font-weight="bold" font-size="51" fill="#f00" stroke="#fff" stroke-width="6.6" stroke-linejoin="round" paint-order="stroke" letter-spacing="-0.6">drag</text>
<text x="513" y="428" font-family="Liberation Sans" font-weight="bold" font-size="51" fill="#f00" stroke="#f00" stroke-width="0.9" stroke-linejoin="round" letter-spacing="-0.6">drag</text>
</svg>
<!-- monitor controls -->
<div class="a" style="left:81px;top:544px;width:23px;height:23px;border-radius:50%;background:#fff"></div>
<div class="a" style="left:83px;top:546px;width:19px;height:19px;border-radius:50%;background:#0a78c0"></div>
<div class="t" style="left:89px;top:549.3px;font-size:14px;font-weight:bold;font-family:'Liberation Serif';color:#fff">1</div>
<div class="t" style="left:48px;top:568.2px;font-size:14px;font-weight:bold;color:#2d8ceb;letter-spacing:-0.05px">00:00:00:25</div>
<div class="a" style="left:150px;top:566px;width:67px;height:17px;background:#1c1c1c;border:1px solid #2e2e2e;border-radius:2px"></div>
<div class="t" style="left:158px;top:570px;color:#c8c8c8">Fit</div>
<svg class="a" style="left:203px;top:572px" width="10" height="6"><path d="M1 1l4 4 4-4" fill="none" stroke="#b8b8b8" stroke-width="1.1"/></svg>
<div class="a" style="left:576px;top:566px;width:67px;height:17px;background:#1c1c1c;border:1px solid #2e2e2e;border-radius:2px"></div>
<div class="t" style="left:583px;top:569px;color:#c8c8c8">1/2</div>
<svg class="a" style="left:628px;top:572px" width="10" height="6"><path d="M1 1l4 4 4-4" fill="none" stroke="#b8b8b8" stroke-width="1.1"/></svg>
<svg class="a" style="left:650px;top:562px" width="25" height="24" viewBox="0 0 25 24">
<path d="M10.5 10.5 L18 18.3" stroke="#b8b8b8" stroke-width="3.2" stroke-linecap="round"/>
<circle cx="9" cy="8.8" r="4.4" fill="#b8b8b8"/>
<path d="M4.6 4.4 L8.6 8.4" stroke="#232323" stroke-width="2.8" stroke-linecap="butt"/>
</svg>
<div class="t" style="left:681px;top:568.2px;font-size:14px;font-weight:bold;color:#b4b4b4;letter-spacing:-0.05px">00:00:05:00</div>
<svg class="a" style="left:0;top:0" width="787" height="662">
<g fill="#5c5c5c">
<rect x="41" y="597" width="1" height="11"/>
<rect x="45" y="603" width="1" height="5"/>
<rect x="50" y="603" width="1" height="5"/>
<rect x="55" y="603" width="1" height="5"/>
<rect x="60" y="603" width="1" height="5"/>
<rect x="65" y="603" width="1" height="5"/>
<rect x="70" y="603" width="1" height="5"/>
<rect x="74" y="603" width="1" height="5"/>
<rect x="79" y="603" width="1" height="5"/>
<rect x="84" y="603" width="1" height="5"/>
<rect x="89" y="603" width="1" height="5"/>
<rect x="94" y="603" width="1" height="5"/>
<rect x="99" y="603" width="1" height="5"/>
<rect x="104" y="603" width="1" height="5"/>
<rect x="108" y="603" width="1" height="5"/>
<rect x="113" y="597" width="1" height="11"/>
<rect x="118" y="603" width="1" height="5"/>
<rect x="123" y="603" width="1" height="5"/>
<rect x="128" y="603" width="1" height="5"/>
<rect x="133" y="603" width="1" height="5"/>
<rect x="137" y="603" width="1" height="5"/>
<rect x="142" y="603" width="1" height="5"/>
<rect x="147" y="603" width="1" height="5"/>
<rect x="152" y="603" width="1" height="5"/>
<rect x="157" y="603" width="1" height="5"/>
<rect x="162" y="603" width="1" height="5"/>
<rect x="167" y="603" width="1" height="5"/>
<rect x="171" y="603" width="1" height="5"/>
<rect x="176" y="603" width="1" height="5"/>
<rect x="181" y="603" width="1" height="5"/>
<rect x="186" y="597" width="1" height="11"/>
<rect x="191" y="603" width="1" height="5"/>
<rect x="196" y="603" width="1" height="5"/>
<rect x="200" y="603" width="1" height="5"/>
<rect x="205" y="603" width="1" height="5"/>
<rect x="210" y="603" width="1" height="5"/>
<rect x="215" y="603" width="1" height="5"/>
<rect x="220" y="603" width="1" height="5"/>
<rect x="225" y="603" width="1" height="5"/>
<rect x="230" y="603" width="1" height="5"/>
<rect x="234" y="603" width="1" height="5"/>
<rect x="239" y="603" width="1" height="5"/>
<rect x="244" y="603" width="1" height="5"/>
<rect x="249" y="603" width="1" height="5"/>
<rect x="254" y="603" width="1" height="5"/>
<rect x="259" y="597" width="1" height="11"/>
<rect x="263" y="603" width="1" height="5"/>
<rect x="268" y="603" width="1" height="5"/>
<rect x="273" y="603" width="1" height="5"/>
<rect x="278" y="603" width="1" height="5"/>
<rect x="283" y="603" width="1" height="5"/>
<rect x="288" y="603" width="1" height="5"/>
<rect x="293" y="603" width="1" height="5"/>
<rect x="297" y="603" width="1" height="5"/>
<rect x="302" y="603" width="1" height="5"/>
<rect x="307" y="603" width="1" height="5"/>
<rect x="312" y="603" width="1" height="5"/>
<rect x="317" y="603" width="1" height="5"/>
<rect x="322" y="603" width="1" height="5"/>
<rect x="326" y="603" width="1" height="5"/>
<rect x="331" y="597" width="1" height="11"/>
<rect x="336" y="603" width="1" height="5"/>
<rect x="341" y="603" width="1" height="5"/>
<rect x="346" y="603" width="1" height="5"/>
<rect x="351" y="603" width="1" height="5"/>
<rect x="356" y="603" width="1" height="5"/>
<rect x="360" y="603" width="1" height="5"/>
<rect x="365" y="603" width="1" height="5"/>
<rect x="370" y="603" width="1" height="5"/>
<rect x="375" y="603" width="1" height="5"/>
<rect x="380" y="603" width="1" height="5"/>
<rect x="385" y="603" width="1" height="5"/>
<rect x="390" y="603" width="1" height="5"/>
<rect x="394" y="603" width="1" height="5"/>
<rect x="399" y="603" width="1" height="5"/>
<rect x="404" y="597" width="1" height="11"/>
<rect x="409" y="603" width="1" height="5"/>
<rect x="414" y="603" width="1" height="5"/>
<rect x="419" y="603" width="1" height="5"/>
<rect x="423" y="603" width="1" height="5"/>
<rect x="428" y="603" width="1" height="5"/>
<rect x="433" y="603" width="1" height="5"/>
<rect x="438" y="603" width="1" height="5"/>
<rect x="443" y="603" width="1" height="5"/>
<rect x="448" y="603" width="1" height="5"/>
<rect x="453" y="603" width="1" height="5"/>
<rect x="457" y="603" width="1" height="5"/>
<rect x="462" y="603" width="1" height="5"/>
<rect x="467" y="603" width="1" height="5"/>
<rect x="472" y="603" width="1" height="5"/>
<rect x="477" y="597" width="1" height="11"/>
<rect x="482" y="603" width="1" height="5"/>
<rect x="486" y="603" width="1" height="5"/>
<rect x="491" y="603" width="1" height="5"/>
<rect x="496" y="603" width="1" height="5"/>
<rect x="501" y="603" width="1" height="5"/>
<rect x="506" y="603" width="1" height="5"/>
<rect x="511" y="603" width="1" height="5"/>
<rect x="516" y="603" width="1" height="5"/>
<rect x="520" y="603" width="1" height="5"/>
<rect x="525" y="603" width="1" height="5"/>
<rect x="530" y="603" width="1" height="5"/>
<rect x="535" y="603" width="1" height="5"/>
<rect x="540" y="603" width="1" height="5"/>
<rect x="545" y="603" width="1" height="5"/>
<rect x="549" y="597" width="1" height="11"/>
<rect x="554" y="603" width="1" height="5"/>
<rect x="559" y="603" width="1" height="5"/>
<rect x="564" y="603" width="1" height="5"/>
<rect x="569" y="603" width="1" height="5"/>
<rect x="574" y="603" width="1" height="5"/>
<rect x="579" y="603" width="1" height="5"/>
<rect x="583" y="603" width="1" height="5"/>
<rect x="588" y="603" width="1" height="5"/>
<rect x="593" y="603" width="1" height="5"/>
<rect x="598" y="603" width="1" height="5"/>
<rect x="603" y="603" width="1" height="5"/>
<rect x="608" y="603" width="1" height="5"/>
<rect x="612" y="603" width="1" height="5"/>
<rect x="617" y="603" width="1" height="5"/>
<rect x="622" y="597" width="1" height="11"/>
<rect x="627" y="603" width="1" height="5"/>
<rect x="632" y="603" width="1" height="5"/>
<rect x="637" y="603" width="1" height="5"/>
<rect x="642" y="603" width="1" height="5"/>
<rect x="646" y="603" width="1" height="5"/>
<rect x="651" y="603" width="1" height="5"/>
<rect x="656" y="603" width="1" height="5"/>
<rect x="661" y="603" width="1" height="5"/>
<rect x="666" y="603" width="1" height="5"/>
<rect x="671" y="603" width="1" height="5"/>
<rect x="676" y="603" width="1" height="5"/>
<rect x="680" y="603" width="1" height="5"/>
<rect x="685" y="603" width="1" height="5"/>
<rect x="690" y="603" width="1" height="5"/>
<rect x="695" y="597" width="1" height="11"/>
<rect x="700" y="603" width="1" height="5"/>
<rect x="705" y="603" width="1" height="5"/>
<rect x="709" y="603" width="1" height="5"/>
<rect x="714" y="603" width="1" height="5"/>
<rect x="719" y="603" width="1" height="5"/>
<rect x="724" y="603" width="1" height="5"/>
<rect x="729" y="603" width="1" height="5"/>
<rect x="734" y="603" width="1" height="5"/>
<rect x="739" y="603" width="1" height="5"/>
<rect x="743" y="603" width="1" height="5"/>
<rect x="748" y="603" width="1" height="5"/>
<rect x="753" y="603" width="1" height="5"/>
<rect x="758" y="603" width="1" height="5"/>
<rect x="763" y="603" width="1" height="5"/>
<rect x="768" y="597" width="1" height="11"/>
<rect x="772" y="603" width="1" height="5"/>
</g>
<rect x="48" y="609" width="720" height="11" fill="#2f2f2f"/>
<circle cx="48" cy="614.8" r="4" fill="none" stroke="#9a9a9a" stroke-width="2"/>
<circle cx="768" cy="614.8" r="4" fill="none" stroke="#9a9a9a" stroke-width="2"/>
<path d="M157 595h11v9l-3 3h-3l-2 -0.5z" fill="#2d8ceb"/>
<path d="M157 595h11v8l-5.5 4.5-5.5-4.5z" fill="#2d8ceb"/>
<rect x="162" y="603" width="1" height="5" fill="#000"/>
<path d="M165 604h6l-3 4h-3z" fill="#2d8ceb"/>
<!-- transport -->
<g fill="#b4b4b4">
<path d="M220 634h9v6l-4.5 4.2-4.5-4.2z"/>
<path d="M261 632h2.2v5l-2 1.5 2 1.5v5h-2.2v-4.5l-2-2 2-2z"/>
<path d="M292 632h2.2v4.5l2 2-2 2v4.5h-2.2v-5l2-1.5-2-1.5z"/>
<path d="M333 632h2.2v5l-2 1.5 2 1.5v5h-2.2v-4.5l-2-2 2-2z"/>
<path d="M336.3 638.5l5.2-4.6v3h5v3.2h-5v3z"/>
<path d="M366.8 638.6l8.1-4.4v8.8z"/><rect x="376.8" y="634.2" width="2.2" height="8.8"/>
<path d="M402 633l12.5 5.6-12.5 5.6z"/>
<rect x="438" y="634.2" width="2.2" height="8.8"/><path d="M442.3 634.2l8.2 4.4-8.2 4.4z"/>
<path d="M480.5 638.5l-5.2-4.6v3h-5.5v3.2h5.5v3z"/>
<path d="M481 632h2.2v4.5l2 2-2 2v4.5h-2.2v-5l2-1.5-2-1.5z"/>
<!-- lift -->
<path d="M516 632h9v7h-9z M517.2 633.2v4.6h6.6v-4.6z" fill-rule="evenodd"/>
<path d="M518.6 637l1.9-2.6 1.9 2.6z"/>
<path d="M511 637h6v2h7v-2h6v7h-7v-4h-5v4h-7z"/>
<!-- extract -->
<path d="M551 632h9v7h-9z M552.2 633.2v4.6h6.6v-4.6z" fill-rule="evenodd"/>
<path d="M553.6 637l1.9-2.6 1.9 2.6z"/>
<path d="M546 637h6v2h7v-2h6v7h-7v-4h-5v4h-7z"/>
<path d="M547.3 638.4l3.2 2.2-3.2 2.2z" fill="#1e1e1e"/><path d="M563.7 638.4l-3.2 2.2 3.2 2.2z" fill="#1e1e1e"/>
<!-- camera -->
<path d="M584 634.7h4l0.8-1.9h4.8l0.8 1.9h3.6v9.1h-14z"/>
<circle cx="591" cy="638.9" r="2.6" fill="none" stroke="#1e1e1e" stroke-width="0.9"/>
<!-- film -->
<rect x="616" y="631" width="11" height="9"/>
<g fill="#1e1e1e"><circle cx="617.6" cy="632.5" r="0.6"/><circle cx="617.6" cy="634.5" r="0.6"/><circle cx="617.6" cy="636.5" r="0.6"/><circle cx="617.6" cy="638.5" r="0.6"/>
<circle cx="625.4" cy="632.5" r="0.6"/><circle cx="625.4" cy="634.5" r="0.6"/><circle cx="625.4" cy="636.5" r="0.6"/><circle cx="625.4" cy="638.5" r="0.6"/></g>
<path d="M628 636.8h7v9.2h-11v-5h1v0.5h2.5v3.7h5v-7.4h-4.5z"/>
<g fill="#1e1e1e"><circle cx="633.4" cy="638.7" r="0.6"/><circle cx="633.4" cy="640.7" r="0.6"/><circle cx="633.4" cy="642.7" r="0.6"/><circle cx="633.4" cy="644.5" r="0.6"/>
<circle cx="625.6" cy="642.7" r="0.6"/><circle cx="625.6" cy="644.5" r="0.6"/></g>
<!-- swap -->
<rect x="653" y="633" width="9" height="6.8"/><rect x="661" y="641" width="7.3" height="5.1"/>
<path d="M663.3 633.8c2.4 0.6 3.8 2.2 4.2 4" fill="none" stroke="#b4b4b4" stroke-width="1.1"/><path d="M665.6 638l1.9 2 1.9-2z"/>
<path d="M659.7 645.7c-2.4-0.6-3.8-2.2-4.2-4" fill="none" stroke="#b4b4b4" stroke-width="1.1"/><path d="M653.6 641l1.9-2 1.9 2z"/>
<!-- plus -->
<rect x="750" y="639" width="11" height="3" fill="#c8c8c8"/><rect x="754" y="635" width="3" height="11" fill="#c8c8c8"/>
</g>
</svg>


<div class="t" style="left:804px;top:43px;color:#d0d0d0;letter-spacing:-0.1px">Effect Controls</div>
<svg class="a" style="left:885px;top:44px" width="10" height="9"><path d="M1 1.5h8M1 4.5h8M1 7.5h8" stroke="#c8c8c8" stroke-width="1.2"/></svg>
<div class="a" style="left:802px;top:64px;width:92px;height:2px;background:#c8c8c8"></div>
<div class="t" style="left:917px;top:43px;color:#a4a4a4;letter-spacing:0.2px">Lumetri Color</div>
<div class="t" style="left:1029px;top:43px;color:#a4a4a4;letter-spacing:-0.1px">Essential Graphics</div>
<div class="t" style="left:1162px;top:43px;color:#a4a4a4;letter-spacing:-0.1px">Essential Sound</div>
<div class="t" style="left:1281px;top:43px;color:#a4a4a4">T</div>
<div class="a" style="left:796px;top:81px;width:287px;height:22px;background:#222;border:1px solid #2c2c2c"></div>
<div class="a" style="left:894px;top:82px;width:107px;height:20px;background:#1a1a1a"></div>
<div class="t" style="left:801px;top:88px;color:#a8a8a8;letter-spacing:-0.2px">Source · Fish.png</div>
<svg class="a" style="left:896px;top:90px" width="10" height="6"><path d="M1 1l4 4 4-4" fill="none" stroke="#a8a8a8" stroke-width="1.1"/></svg>
<div class="t" style="left:916px;top:88px;color:#3d96f0;letter-spacing:-0.15px">Fish · Fish.png</div>
<svg class="a" style="left:1067px;top:88px" width="9" height="9"><path d="M1 0.5l6 4-6 4z" fill="#c0c0c0"/></svg>
<div class="a" style="left:796px;top:103px;width:287px;height:536px;background:#1f1f1f;border-left:1px solid #2c2c2c;border-bottom:1px solid #2c2c2c"></div>
<div class="a" style="left:797px;top:103px;width:285px;height:20px;background:#1b1b1b"></div>
<div class="a" style="left:797px;top:123px;width:285px;height:1px;background:#2c2c2c"></div>
<div class="a" style="left:1082px;top:81px;width:1px;height:558px;background:#2c2c2c"></div>
<div class="t" style="left:805px;top:110px;color:#bcbcbc">Video</div>
<svg class="a" style="left:1066px;top:111px" width="11" height="6"><path d="M0.5 5.5l5-5 5 5z" fill="#c0c0c0"/></svg>
<svg class="a" style="left:0;top:0" width="1283" height="662">
<g fill="#5c5c5c">
<rect x="1083" y="89" width="1" height="13"/>
<rect x="1088" y="97" width="1" height="5"/>
<rect x="1093" y="97" width="1" height="5"/>
<rect x="1099" y="97" width="1" height="5"/>
<rect x="1104" y="97" width="1" height="5"/>
<rect x="1109" y="97" width="1" height="5"/>
<rect x="1115" y="97" width="1" height="5"/>
<rect x="1120" y="97" width="1" height="5"/>
<rect x="1125" y="97" width="1" height="5"/>
<rect x="1131" y="97" width="1" height="5"/>
<rect x="1136" y="97" width="1" height="5"/>
<rect x="1141" y="97" width="1" height="5"/>
<rect x="1146" y="97" width="1" height="5"/>
<rect x="1152" y="97" width="1" height="5"/>
<rect x="1157" y="97" width="1" height="5"/>
<rect x="1162" y="89" width="1" height="13"/>
<rect x="1168" y="97" width="1" height="5"/>
<rect x="1173" y="97" width="1" height="5"/>
<rect x="1178" y="97" width="1" height="5"/>
<rect x="1184" y="97" width="1" height="5"/>
<rect x="1189" y="97" width="1" height="5"/>
<rect x="1194" y="97" width="1" height="5"/>
<rect x="1200" y="97" width="1" height="5"/>
<rect x="1205" y="97" width="1" height="5"/>
<rect x="1210" y="97" width="1" height="5"/>
<rect x="1215" y="97" width="1" height="5"/>
<rect x="1221" y="97" width="1" height="5"/>
<rect x="1226" y="97" width="1" height="5"/>
<rect x="1231" y="97" width="1" height="5"/>
<rect x="1237" y="97" width="1" height="5"/>
<rect x="1242" y="89" width="1" height="13"/>
<rect x="1247" y="97" width="1" height="5"/>
<rect x="1253" y="97" width="1" height="5"/>
<rect x="1258" y="97" width="1" height="5"/>
<rect x="1263" y="97" width="1" height="5"/>
<rect x="1269" y="97" width="1" height="5"/>
<rect x="1274" y="97" width="1" height="5"/>
<rect x="1279" y="97" width="1" height="5"/>
</g>
<rect x="1083" y="103" width="200" height="20" fill="#e583e0"/>
<rect x="1083" y="88" width="1" height="5" fill="#8a3030"/>
<rect x="1083" y="144" width="200" height="1" fill="#2a2a2a"/>
<rect x="1083" y="165" width="200" height="1" fill="#2a2a2a"/>
<rect x="1083" y="186" width="200" height="1" fill="#2a2a2a"/>
<rect x="1083" y="207" width="200" height="1" fill="#2a2a2a"/>
<rect x="1083" y="228" width="200" height="1" fill="#2a2a2a"/>
<rect x="1083" y="249" width="200" height="1" fill="#2a2a2a"/>
<rect x="1083" y="270" width="200" height="1" fill="#2a2a2a"/>
<rect x="1083" y="291" width="200" height="1" fill="#2a2a2a"/>
<rect x="1083" y="312" width="200" height="1" fill="#2a2a2a"/>
<rect x="1083" y="333" width="200" height="1" fill="#2a2a2a"/>

<rect x="1090" y="627" width="193" height="11" fill="#323232"/>
<circle cx="1090" cy="632.7" r="4" fill="none" stroke="#a0a0a0" stroke-width="2"/>
<path d="M1083.5 150l6 5.5-6 5.5z" fill="#a8a8a8"/>
<path d="M1149 150.5l5.2 5.2-5.2 5.2-5.2-5.2z" fill="#a8a8a8"/><path d="M1149.5 152l3.7 3.7-3.7 3.7z" fill="#2a2a2a"/>
<rect x="1149" y="95" width="1" height="530" fill="#2d8ceb"/>
<rect x="817" y="144" width="265" height="1" fill="#2c2c2c"/>
<rect x="831" y="165" width="251" height="1" fill="#2c2c2c"/>
<rect x="831" y="186" width="251" height="1" fill="#2c2c2c"/>
<rect x="831" y="207" width="251" height="1" fill="#2c2c2c"/>
<rect x="831" y="228" width="251" height="1" fill="#2c2c2c"/>
<rect x="831" y="249" width="251" height="1" fill="#2c2c2c"/>
<rect x="831" y="270" width="251" height="1" fill="#2c2c2c"/>
<rect x="817" y="291" width="265" height="1" fill="#2c2c2c"/>
<rect x="797" y="312" width="285" height="1" fill="#2c2c2c"/>
<rect x="797" y="333" width="285" height="1" fill="#2c2c2c"/>
<rect x="834" y="125" width="195" height="18" fill="#4a4a4a"/>
<path d="M802 131.5l4 4 4-4" fill="none" stroke="#a8a8a8" stroke-width="1.1"/>
<path d="M815.3 151.2l3.7 3.7-3.7 3.7" fill="none" stroke="#a0a0a0" stroke-width="1.1"/>
<path d="M815.3 172.2l3.7 3.7-3.7 3.7" fill="none" stroke="#a0a0a0" stroke-width="1.1"/>
<path d="M815.3 193.2l3.7 3.7-3.7 3.7" fill="none" stroke="#a0a0a0" stroke-width="1.1"/>
<path d="M815.3 235.2l3.7 3.7-3.7 3.7" fill="none" stroke="#a0a0a0" stroke-width="1.1"/>
<path d="M815.3 277.2l3.7 3.7-3.7 3.7" fill="none" stroke="#a0a0a0" stroke-width="1.1"/>
<path d="M801.3 298.2l3.7 3.7-3.7 3.7" fill="none" stroke="#a0a0a0" stroke-width="1.1"/>
<path d="M801.3 319.2l3.7 3.7-3.7 3.7" fill="none" stroke="#a0a0a0" stroke-width="1.1"/>
<rect x="831.5" y="147.5" width="15" height="15.5" rx="2.5" fill="#1c1c1c" stroke="#2e2e2e" stroke-width="1"/><circle cx="838.5" cy="155.5" r="4.9" fill="none" stroke="#3d96f0" stroke-width="1.4"/><path d="M836.3 148.7h4.4M838.5 148.7v2" stroke="#3d96f0" stroke-width="1.3" fill="none"/><path d="M833.9 151.3l1.2-1.2" stroke="#3d96f0" stroke-width="1.3" fill="none"/><path d="M838.5 155.5l2.8-3" stroke="#3d96f0" stroke-width="1.3"/>
<circle cx="838.5" cy="176.5" r="4.9" fill="none" stroke="#c0c0c0" stroke-width="1.4"/><path d="M836.3 169.7h4.4M838.5 169.7v2" stroke="#c0c0c0" stroke-width="1.3" fill="none"/><path d="M833.9 172.3l1.2-1.2" stroke="#c0c0c0" stroke-width="1.3" fill="none"/>
<circle cx="838.5" cy="197.5" r="4.9" fill="none" stroke="#484848" stroke-width="1.4"/><path d="M836.3 190.7h4.4M838.5 190.7v2" stroke="#484848" stroke-width="1.3" fill="none"/><path d="M833.9 193.3l1.2-1.2" stroke="#484848" stroke-width="1.3" fill="none"/>
<circle cx="838.5" cy="239.5" r="4.9" fill="none" stroke="#c0c0c0" stroke-width="1.4"/><path d="M836.3 232.7h4.4M838.5 232.7v2" stroke="#c0c0c0" stroke-width="1.3" fill="none"/><path d="M833.9 235.3l1.2-1.2" stroke="#c0c0c0" stroke-width="1.3" fill="none"/>
<circle cx="838.5" cy="260.5" r="4.9" fill="none" stroke="#c0c0c0" stroke-width="1.4"/><path d="M836.3 253.7h4.4M838.5 253.7v2" stroke="#c0c0c0" stroke-width="1.3" fill="none"/><path d="M833.9 256.3l1.2-1.2" stroke="#c0c0c0" stroke-width="1.3" fill="none"/>
<circle cx="838.5" cy="281.5" r="4.9" fill="none" stroke="#c0c0c0" stroke-width="1.4"/><path d="M836.3 274.7h4.4M838.5 274.7v2" stroke="#c0c0c0" stroke-width="1.3" fill="none"/><path d="M833.9 277.3l1.2-1.2" stroke="#c0c0c0" stroke-width="1.3" fill="none"/>
<path d="M1063.4 131.4 A4.9 4.9 0 1 1 1071.4 135.6" fill="none" stroke="#c4c4c4" stroke-width="1.7"/><path d="M1060.6 131.2 L1067.6 130.8 L1064.3 135.4 Z" fill="#c4c4c4"/><rect x="1062" y="136.7" width="12" height="1.4" fill="#c4c4c4"/>
<path d="M1063.4 152.4 A4.9 4.9 0 1 1 1071.4 156.6" fill="none" stroke="#c4c4c4" stroke-width="1.7"/><path d="M1060.6 152.2 L1067.6 151.8 L1064.3 156.4 Z" fill="#c4c4c4"/><rect x="1062" y="157.7" width="12" height="1.4" fill="#c4c4c4"/>
<path d="M1063.4 173.4 A4.9 4.9 0 1 1 1071.4 177.6" fill="none" stroke="#c4c4c4" stroke-width="1.7"/><path d="M1060.6 173.2 L1067.6 172.8 L1064.3 177.4 Z" fill="#c4c4c4"/><rect x="1062" y="178.7" width="12" height="1.4" fill="#c4c4c4"/>
<path d="M1063.4 194.4 A4.9 4.9 0 1 1 1071.4 198.6" fill="none" stroke="#464646" stroke-width="1.7"/><path d="M1060.6 194.2 L1067.6 193.8 L1064.3 198.4 Z" fill="#464646"/><rect x="1062" y="199.7" width="12" height="1.4" fill="#464646"/>
<path d="M1063.4 215.4 A4.9 4.9 0 1 1 1071.4 219.6" fill="none" stroke="#c4c4c4" stroke-width="1.7"/><path d="M1060.6 215.2 L1067.6 214.8 L1064.3 219.4 Z" fill="#c4c4c4"/><rect x="1062" y="220.7" width="12" height="1.4" fill="#c4c4c4"/>
<path d="M1063.4 236.4 A4.9 4.9 0 1 1 1071.4 240.6" fill="none" stroke="#c4c4c4" stroke-width="1.7"/><path d="M1060.6 236.2 L1067.6 235.8 L1064.3 240.4 Z" fill="#c4c4c4"/><rect x="1062" y="241.7" width="12" height="1.4" fill="#c4c4c4"/>
<path d="M1063.4 257.4 A4.9 4.9 0 1 1 1071.4 261.6" fill="none" stroke="#c4c4c4" stroke-width="1.7"/><path d="M1060.6 257.2 L1067.6 256.8 L1064.3 261.4 Z" fill="#c4c4c4"/><rect x="1062" y="262.7" width="12" height="1.4" fill="#c4c4c4"/>
<path d="M1063.4 278.4 A4.9 4.9 0 1 1 1071.4 282.6" fill="none" stroke="#c4c4c4" stroke-width="1.7"/><path d="M1060.6 278.2 L1067.6 277.8 L1064.3 282.4 Z" fill="#c4c4c4"/><rect x="1062" y="283.7" width="12" height="1.4" fill="#c4c4c4"/>
<path d="M1063.4 299.4 A4.9 4.9 0 1 1 1071.4 303.6" fill="none" stroke="#c4c4c4" stroke-width="1.7"/><path d="M1060.6 299.2 L1067.6 298.8 L1064.3 303.4 Z" fill="#c4c4c4"/><rect x="1062" y="304.7" width="12" height="1.4" fill="#c4c4c4"/>
<rect x="934" y="213" width="14" height="14" rx="2" fill="#8a8a8a"/><path d="M937 220l3 3 5-6" fill="none" stroke="#1e1e1e" stroke-width="1.8"/>
</svg>

<div class="t" style="left:817px;top:127px;font-size:13px;font-style:italic;font-family:'Liberation Serif';color:#b8b8b8">fx</div>
<div class="t" style="left:817px;top:295px;font-size:13px;font-style:italic;font-family:'Liberation Serif';color:#b8b8b8">fx</div>
<div class="t" style="left:817px;top:316px;font-size:13px;font-style:italic;font-family:'Liberation Serif';color:#555">fx</div>
<div class="t" style="left:837px;top:131px;color:#c4c4c4">Motion</div>
<div class="t" style="left:851px;top:152px;color:#bcbcbc">Position</div>
<div class="t" style="left:851px;top:173px;color:#bcbcbc">Scale</div>
<div class="t" style="left:851px;top:194px;color:#555">Scale Width</div>
<div class="t" style="left:952px;top:215px;color:#bcbcbc">Uniform Scale</div>
<div class="t" style="left:851px;top:236px;color:#bcbcbc">Rotation</div>
<div class="t" style="left:851px;top:257px;color:#bcbcbc">Anchor Point</div>
<div class="t" style="left:851px;top:278px;color:#bcbcbc">Anti-flicker Fil...</div>
<div class="t" style="left:837px;top:299px;color:#bcbcbc">Opacity</div>
<div class="t" style="left:837px;top:320px;color:#bcbcbc">Time Remapping</div>
<div class="t" style="left:934px;top:152px;color:#3d96f0">1352.9</div>
<div class="t" style="left:984px;top:152px;color:#3d96f0;letter-spacing:0.1px">513.8</div>
<div class="t" style="left:934px;top:173px;color:#3d96f0">20.0</div>
<div class="t" style="left:934px;top:194px;color:#555">100.0</div>
<div class="t" style="left:934px;top:236px;color:#3d96f0">0.0</div>
<div class="t" style="left:934px;top:257px;color:#3d96f0">960.0</div>
<div class="t" style="left:984px;top:257px;color:#3d96f0">636.0</div>
<div class="t" style="left:934px;top:278px;color:#3d96f0">0.00</div>
<div class="t" style="left:1084px;top:85px;color:#b0b0b0;letter-spacing:-0.1px">:00:00</div>
<div class="t" style="left:1132px;top:85px;color:#b0b0b0;letter-spacing:0.35px">00:00:01:00</div>
<div class="t" style="left:1212px;top:85px;color:#b0b0b0;letter-spacing:0.35px">00:00:02:00</div>
<div class="t" style="left:1088px;top:108px;color:#2e1040;letter-spacing:-0.3px">Fish.png</div>
<div class="t" style="left:797px;top:645px;color:#3d96f0">00:00:00:25</div>
<svg class="a" style="left:1000px;top:146px" width="50" height="20" viewBox="1000 146 50 20">
<path d="M1014.2 150.6 L1009 155.7 L1014.2 160.8 Z" fill="#c0c0c0"/>
<path d="M1026.5 151.3 L1029.8 153.6 L1029.8 157.9 L1026.5 160.2 L1023.2 157.9 L1023.2 153.6 Z" fill="#15406e" stroke="#3d96f0" stroke-width="1.3"/>
<path d="M1040 150.8 L1046 155.7 L1040 160.6 Z" fill="#4a4a4a"/>
</svg>
<svg class="a" style="left:1140px;top:86px" width="20" height="18" viewBox="1140 86 20 18">
<path d="M1144 89h11v8.3l-5.5 4-5.5-4z" fill="#2d8ceb"/>
<rect x="1149" y="98" width="1" height="3.5" fill="#101010"/>
</svg></body></html>
